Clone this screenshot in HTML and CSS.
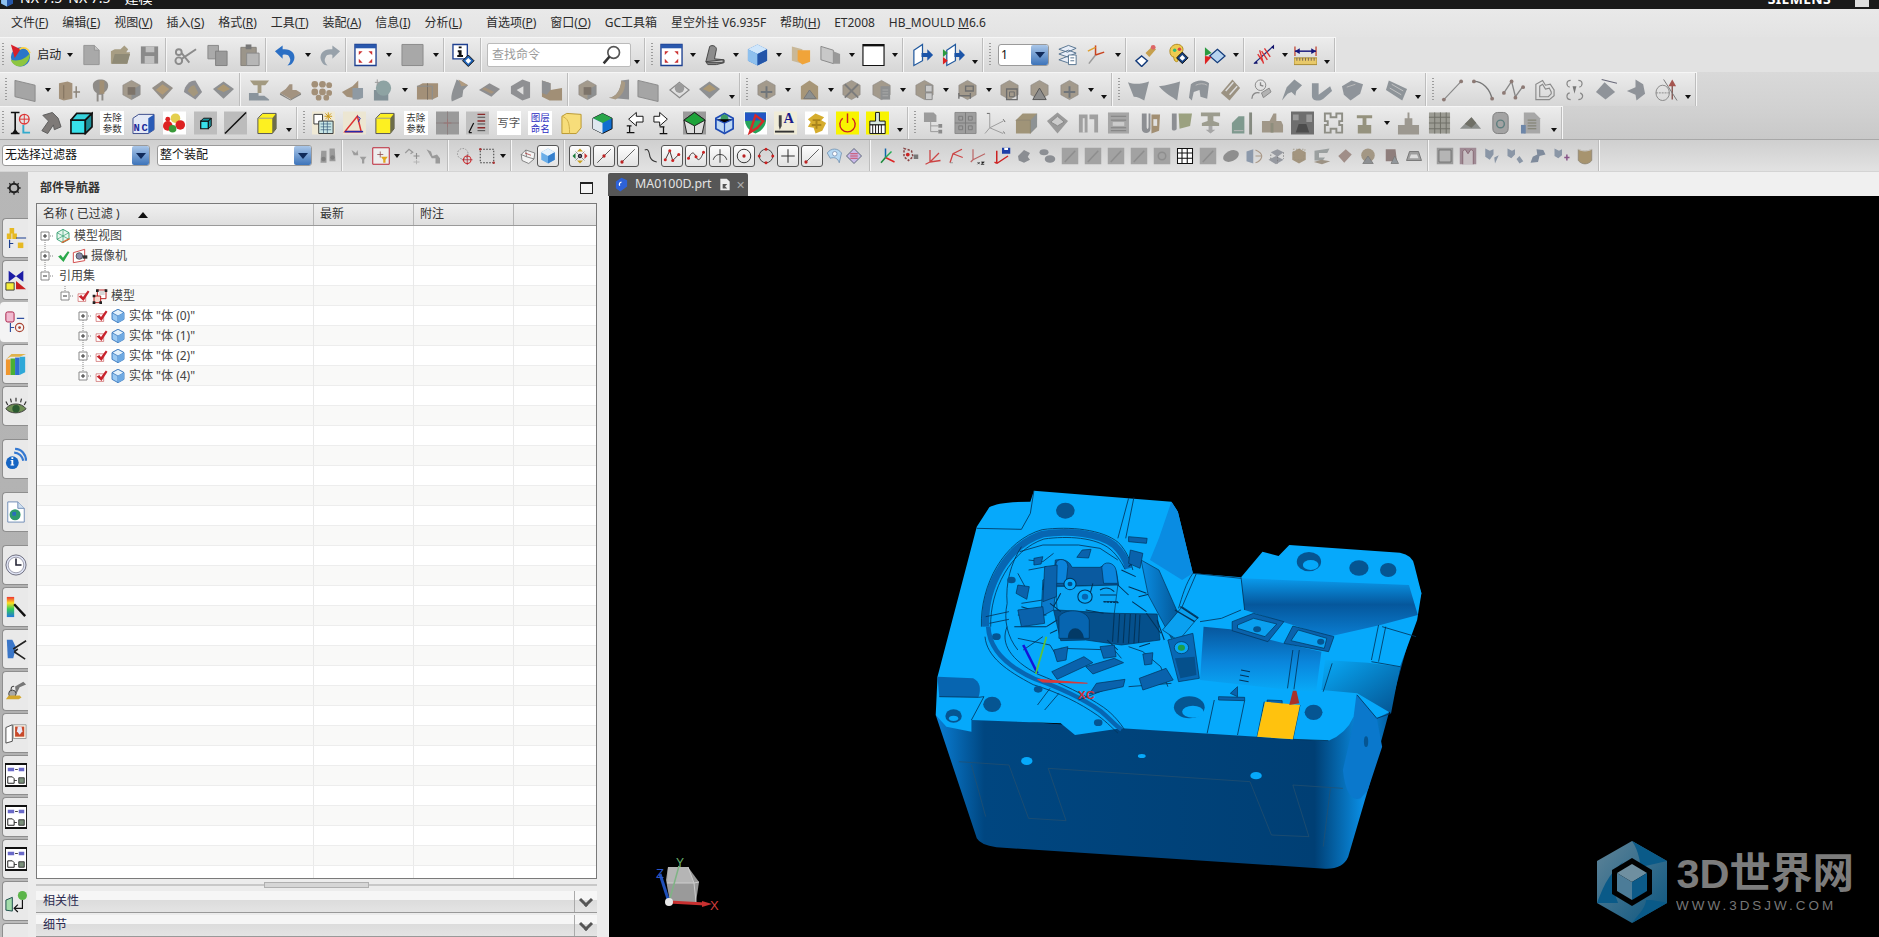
FILE: index.html
```html
<!DOCTYPE html>
<html lang="zh-CN">
<head>
<meta charset="utf-8">
<title>NX 建模</title>
<link rel="stylesheet" href="styles.css">
</head>
<body>
<svg class="sprite" xmlns="http://www.w3.org/2000/svg">
<defs>
<linearGradient id="gBlue" x1="0" y1="0" x2="1" y2="1"><stop offset="0" stop-color="#cfe6fb"/><stop offset="1" stop-color="#2f74c0"/></linearGradient>
<linearGradient id="gBody" x1="0" y1="0" x2="1" y2="0"><stop offset="0" stop-color="#0a7fd6"/><stop offset=".1" stop-color="#004680"/><stop offset=".78" stop-color="#003f74"/><stop offset=".88" stop-color="#0a8ee4"/><stop offset=".95" stop-color="#00508e"/><stop offset="1" stop-color="#0a6fc0"/></linearGradient>
<linearGradient id="gCyl" x1="0" y1="0" x2="0" y2="1"><stop offset="0" stop-color="#07569c"/><stop offset=".55" stop-color="#0a86dc"/><stop offset="1" stop-color="#08aaf8"/></linearGradient>
<linearGradient id="gWedge" x1="0" y1="0" x2="0" y2="1"><stop offset="0" stop-color="#0a9aec"/><stop offset=".45" stop-color="#05579c"/><stop offset="1" stop-color="#0a7ed2"/></linearGradient>
<linearGradient id="gRight" x1="0" y1="0" x2="1" y2="1"><stop offset="0" stop-color="#08aaf8"/><stop offset="1" stop-color="#04528f"/></linearGradient>
<linearGradient id="gBar" x1="0" y1="0" x2="1" y2="0"><stop offset="0" stop-color="#0a8ee4"/><stop offset="1" stop-color="#034f8c"/></linearGradient>
<linearGradient id="gSpec" x1="0" y1="0" x2="0" y2="1"><stop offset="0" stop-color="#e33"/><stop offset=".3" stop-color="#fd2"/><stop offset=".6" stop-color="#3c5"/><stop offset="1" stop-color="#27d"/></linearGradient>
<linearGradient id="gHexA" x1="0" y1="0" x2="1" y2="1"><stop offset="0" stop-color="#5f8498"/><stop offset="1" stop-color="#0c5680"/></linearGradient>
<path id="cb" d="M12 2l9 5v10l-9 5-9-5V7z" fill="#a39a8c" stroke="#86837d" stroke-width=".6"/>
<path id="cf" d="M12 12l9-5v10l-9 5z" fill="#8d8f90"/>
</defs>
<symbol id="logo" viewBox="0 0 24 24"><circle cx="13" cy="14" r="10" fill="#2a76c9"/><path d="M3 17c7 2 15 0 20-7 0 8-5 14-11 14-4 0-8-3-9-7z" fill="#8dc63f"/><path d="M3 1l10 5-6 9z" fill="#d8202a"/><path d="M12 6c5-3 9-1 11 4" fill="none" stroke="#ffd23f" stroke-width="1.6"/></symbol>
<symbol id="doc" viewBox="0 0 24 24"><path d="M4 2h11l5 5v15H4z" fill="#a9a9a9" stroke="#949494"/><path d="M15 2v5h5" fill="#c4c4c4" stroke="#949494"/></symbol>
<symbol id="ofold" viewBox="0 0 24 24"><path d="M2 21V8l4-2h6l4-4 4 4-2 3h4l-3 12z" fill="#a79d83"/><path d="M3 21l3-10h16l-3 10z" fill="#8f8a76"/></symbol>
<symbol id="save" viewBox="0 0 24 24"><path d="M3 3h18v18H3z" fill="#8a8a8a"/><path d="M8 3h9v6H8zM7 13h10v8H7z" fill="#c0c0c0"/></symbol>
<symbol id="scis" viewBox="0 0 24 24"><g fill="none" stroke="#8b8b8b" stroke-width="2"><circle cx="5" cy="18" r="3.5"/><circle cx="5" cy="9" r="3"/><path d="M8 16L23 6M8 10l8 10"/></g></symbol>
<symbol id="copy" viewBox="0 0 24 24"><path d="M2 2h11v14H2z" fill="#aaa" stroke="#888"/><path d="M10 8h12v15H10z" fill="#9a9a9a" stroke="#7f7f7f"/></symbol>
<symbol id="paste" viewBox="0 0 24 24"><path d="M3 4h16v19H3z" fill="#9b958a" stroke="#85817a"/><path d="M8 1h6v5H8z" fill="#777"/><path d="M9 10h13v13H9z" fill="#b6b6b6" stroke="#8a8a8a"/></symbol>
<symbol id="undo" viewBox="0 0 24 24"><path d="M1 8l8-6v4c8-1 14 4 12 11-1 3-3 6-7 6 3-3 4-6 2-9-1-2-4-3-7-2v4z" fill="#2b6fc4"/></symbol>
<symbol id="redo" viewBox="0 0 24 24"><path d="M23 8l-8-6v4C7 5 1 10 3 17c1 3 3 6 7 6-3-3-4-6-2-9 1-2 4-3 7-2v4z" fill="#97a1aa"/></symbol>
<symbol id="fit" viewBox="0 0 24 24"><path d="M1 1h22v22H1z" fill="#fff" stroke="#1d3f8f" stroke-width="1.4"/><path d="M1 1h22v4H1z" fill="#2a58ad"/><path d="M5 8h4L5 12zM19 8h-4l4 4zM5 20h4l-4-4zM19 20h-4l4-4z" fill="#c33"/></symbol>
<symbol id="gsq" viewBox="0 0 24 24"><path d="M1 1h22v22H1z" fill="#a8a8a8" stroke="#8a8a8a"/></symbol>
<symbol id="info" viewBox="0 0 24 24"><path d="M1 1h15v15H1z" fill="#fff" stroke="#1d3f8f" stroke-width="1.4"/><path d="M7 3h3v2H7zM6 7h4v5h1.500v2H5.500v-2H7V9H6z" fill="#111"/><path d="M17 12l6 6-6 6-6-6z" fill="#1f63b8" stroke="#111"/><path d="M17 15l3 3-3 3-3-3z" fill="#fff"/></symbol>
<symbol id="mag" viewBox="0 0 24 24"><circle cx="14" cy="9" r="7" fill="#fff" stroke="#555" stroke-width="2"/><path d="M9 14l-7 8" stroke="#333" stroke-width="3"/></symbol>
<symbol id="shade" viewBox="0 0 24 24"><path d="M3 19L7 3c3-2 7 0 7 3l-2 10 10 1v3l-8 2H5z" fill="#8c8c8c" stroke="#444"/><path d="M3 19l18-2v3H6z" fill="#bbb" stroke="#444"/></symbol>
<symbol id="cube" viewBox="0 0 24 24"><path d="M12 1l10 5v12l-10 5-10-5V6z" fill="#3a82d4"/><path d="M12 1l10 5-10 5L2 6z" fill="#cfe6fb"/><path d="M2 6l10 5v12L2 18z" fill="#8ec0ee"/><path d="M22 6l-10 5v12l10-5z" fill="#2455a8"/></symbol>
<symbol id="rc" viewBox="0 0 24 24"><path d="M12 2l9 5v10l-9 5-9-5V7z" fill="#9ccaf2" stroke="#2f6fb8" stroke-width="1.300"/><path d="M3 7l9 5 9-5-9-5z" fill="#e4f2fc" stroke="#2f6fb8" stroke-width="1.100"/><path d="M12 12v10" stroke="#2f6fb8" stroke-width="1.100"/><path d="M12 12l9-5v10l-9 5z" fill="#6ea9e2"/></symbol>
<symbol id="ofold2" viewBox="0 0 24 24"><path d="M3 3l11 3v15L3 18z" fill="#c9b898"/><path d="M9 7h13v12l-8 3-5-4z" fill="#f0a43a"/></symbol>
<symbol id="gdoc" viewBox="0 0 24 24"><path d="M2 3l13 4v14L2 17z" fill="#c8c8c8" stroke="#888"/><path d="M15 8l7 3v10l-7 0z" fill="#999"/></symbol>
<symbol id="wsq" viewBox="0 0 24 24"><path d="M1 1h22v22H1z" fill="#fff" stroke="#111" stroke-width="1.2"/><path d="M1 1h22v2H1z" fill="#111"/></symbol>
<symbol id="door" viewBox="0 0 24 24"><path d="M3 7l9-6v17l-9 5z" fill="#fff" stroke="#235a9e" stroke-width="1.300"/><path d="M12 1v17" stroke="#235a9e"/><path d="M11 10h6V6l6 6-6 6v-4h-6z" fill="#1c55a8"/></symbol>
<symbol id="door2" viewBox="0 0 24 24"><path d="M5 7l9-6v17l-9 5z" fill="#fff" stroke="#235a9e" stroke-width="1.300"/><path d="M1 6l5 4-5 4z" fill="#2a9a3f"/><path d="M1 14l5 4-5 4z" fill="#d22"/><path d="M13 10h5V6l6 6-6 6v-4h-5z" fill="#1c55a8"/></symbol>
<symbol id="layers" viewBox="0 0 24 24"><path d="M3 6l10-4 8 3-9 4zM3 11l10-4 8 3-9 4zM3 17l10-4 8 3-9 4z" fill="#e8eef8" stroke="#56738f"/><path d="M13 12h8v10h-8z" fill="#fff" stroke="#56738f"/><path d="M15 15h4M15 18h4" stroke="#56738f"/></symbol>
<symbol id="csys" viewBox="0 0 24 24"><g fill="none" stroke-width="1.6"><path d="M11 12L4 21" stroke="#9a9a9a"/><path d="M11 12l9-3" stroke="#c8431f"/><path d="M11 12V2" stroke="#c8431f"/><path d="M3 8l8-4" stroke="#e0a030"/></g></symbol>
<symbol id="erase" viewBox="0 0 24 24"><path d="M8 13l6 5-6 6-6-6z" fill="#fff" stroke="#123a7a" stroke-width="1.500"/><path d="M12 10l7-7 4 3-7 8z" fill="#c6a04e"/><circle cx="20" cy="4" r="2.500" fill="#d66"/></symbol>
<symbol id="palette" viewBox="0 0 24 24"><path d="M3 8c0-5 5-8 9-7 5 1 6 6 3 9-2 2-4 2-4 5 0 2 1 4-1 4-2 0-3-3-3-5-2 0-4-2-4-6z" fill="#eecb50" stroke="#b08a20"/><circle cx="8" cy="7" r="1.800" fill="#3b7"/><circle cx="13" cy="6" r="1.800" fill="#d44"/><path d="M16 9l6 6-6 6-6-6z" fill="#15407f" stroke="#111"/><path d="M16 12l3 3-3 3-3-3z" fill="#fff"/></symbol>
<symbol id="dflag" viewBox="0 0 24 24"><path d="M15 6l8 7-8 7-8-7z" fill="#b7d3ef" stroke="#123a7a" stroke-width="1.300"/><path d="M2 4l7 6-7 3z" fill="#2a9a3f"/><path d="M2 13l7 1-7 8z" fill="#d22"/></symbol>
<symbol id="ant" viewBox="0 0 24 24"><path d="M2 21L22 3" stroke="#1f2f80" stroke-width="1.400"/><path d="M6 11l6 9M10 8l6 9M13 5l6 9M8 7l4 14" stroke="#d33" stroke-width="1.400"/><path d="M2 21l3-3 1 3zM20 4l3-3 0 5z" fill="#12126a"/></symbol>
<symbol id="ruler" viewBox="0 0 24 24"><path d="M1 3v10M23 3v10" stroke="#b32" stroke-width="1.200"/><path d="M1 8h22" stroke="#15157a" stroke-width="1.500"/><path d="M1 8l5-3v6zM23 8l-5-3v6z" fill="#15157a"/><path d="M0 15h24v7H0z" fill="#e8c96a" stroke="#a88a30"/><path d="M3 15v3M6 15v3M9 15v3M12 15v3M15 15v3M18 15v3M21 15v3" stroke="#765"/></symbol>
<symbol id="sheet" viewBox="0 0 24 24"><path d="M1 2l21 5v17L1 19z" fill="#a5a5a5" stroke="#8a8a8a"/></symbol>
<symbol id="p1" viewBox="0 0 24 24"><path d="M1 5l9-2 5 2v16l-9 2-5-2z" fill="#a3917a"/><path d="M6 7v14" stroke="#7d6f5d"/><path d="M19 8v12M16 14h7" stroke="#8b8378" stroke-width="1.500"/></symbol>
<symbol id="p2" viewBox="0 0 24 24"><path d="M4 7c0-8 16-8 16 0 0 5-3 7-5 8v8h-2v-6h-3v7H8v-9c-2-1-4-3-4-8z" fill="#8e8b87"/><path d="M11 2h5v14h-5z" fill="#a18f75"/></symbol>
<symbol id="p3" viewBox="0 0 24 24"><use href="#cb"/><use href="#cf"/><path d="M8 9h8v8H8z" fill="#7d746a"/></symbol>
<symbol id="p4" viewBox="0 0 24 24"><path d="M12 2l11 8-11 12L1 10z" fill="#948f88"/><path d="M12 6l7 5-7 6-7-5z" fill="#b19a76"/></symbol>
<symbol id="p5" viewBox="0 0 24 24"><path d="M3 14C4 7 9 2 15 2l7 12-7 8z" fill="#8f9094"/><path d="M7 13c1-3 4-6 7-6l4 8-5 4z" fill="#a4977d"/></symbol>
<symbol id="p6" viewBox="0 0 24 24"><path d="M12 3l11 8-11 10L1 11z" fill="#8e9092"/><path d="M12 6l7 5-7 3-7-3z" fill="#ac9873"/></symbol>
<symbol id="p7" viewBox="0 0 24 24"><path d="M2 2h20l-4 5h-4v8h-4V7H6z" fill="#a39a80"/><path d="M1 15h10v3h6l5 4v1H1z" fill="#8a949c"/></symbol>
<symbol id="p8" viewBox="0 0 24 24"><path d="M1 15l6-4 4-5h3v6l4 0 5 3-10 7z" fill="#a39380"/><path d="M1 15l11 7 11-7v2l-11 6-11-6z" fill="#86847f"/></symbol>
<symbol id="p9" viewBox="0 0 24 24"><g fill="#a39078"><circle cx="5" cy="6" r="3.500"/><circle cx="13" cy="6" r="3.500"/><circle cx="20" cy="7" r="3"/><circle cx="5" cy="14" r="3.500"/><circle cx="13" cy="14" r="3.500"/><circle cx="20" cy="15" r="3"/><circle cx="9" cy="20" r="3"/><circle cx="17" cy="20" r="3"/></g></symbol>
<symbol id="p10" viewBox="0 0 24 24"><path d="M1 14l11-6 6-6v20l-6-2-6-1z" fill="#a3917a"/><path d="M12 10h11v10l-5 2h-6z" fill="#8f9aa3"/></symbol>
<symbol id="p11" viewBox="0 0 24 24"><path d="M2 12h15v11H2z" fill="#829197"/><circle cx="12" cy="10" r="8" fill="#8ea3a3"/><path d="M3 4h5M5.500 1v6" stroke="#999"/></symbol>
<symbol id="p12" viewBox="0 0 24 24"><path d="M1 8l6-3h16v14l-6 3H1z" fill="#a39078"/><path d="M12 5v17" stroke="#7b6f60"/><path d="M1 8h16v14" fill="none" stroke="#8a8f92"/></symbol>
<symbol id="p13" viewBox="0 0 24 24"><path d="M10 1l12 6-5 5-1 7-11 5C3 17 8 8 10 1z" fill="#8e9194"/><path d="M12 1l10 6-7 1z" fill="#b09b80"/></symbol>
<symbol id="p14" viewBox="0 0 24 24"><path d="M12 5l11 6-9 8L1 12z" fill="#8e8e90"/><path d="M7 9l10 5-3 2L4 11z" fill="#a5937c"/></symbol>
<symbol id="p15" viewBox="0 0 24 24"><path d="M2 8l12-7 8 3v16l-8 3-12-7z" fill="#8f9093"/><path d="M8 12l7-4v9z" fill="#dedede"/></symbol>
<symbol id="p16" viewBox="0 0 24 24"><path d="M2 2l9 3v7l12-2v13H10l-8-4z" fill="#a18f76"/><path d="M2 2l9 3v7l-4 5-5-2z" fill="#8e9093"/></symbol>
<symbol id="p17" viewBox="0 0 24 24"><path d="M2 20c8-1 12-8 13-18l8-1v21z" fill="#8f9093"/><path d="M2 20c8-1 12-8 13-18l4 2c0 10-5 15-10 18z" fill="#a89a84"/></symbol>
<symbol id="p18" viewBox="0 0 24 24"><path d="M12 4l10 8-10 8L2 12z" fill="none" stroke="#888" stroke-width="1.200"/><circle cx="12" cy="10" r="5" fill="#9b9b9b"/></symbol>
<symbol id="c1" viewBox="0 0 24 24"><use href="#cb"/><path d="M6 14h12M12 8v12" stroke="#70757a" stroke-width="2"/></symbol>
<symbol id="c2" viewBox="0 0 24 24"><path d="M12 2l9 6v14H3V8z" fill="#a79677"/><path d="M6 21l6-9 7 9z" fill="#8b8f8f" stroke="#777"/></symbol>
<symbol id="c3" viewBox="0 0 24 24"><use href="#cb"/><path d="M5 6l14 14M19 6L5 20" stroke="#7c7c7c" stroke-width="2"/></symbol>
<symbol id="c4" viewBox="0 0 24 24"><use href="#cb"/><path d="M11 8h10v14H11z" fill="#8e9091"/><path d="M13 12h6M13 15h6M13 18h6" stroke="#aaa"/></symbol>
<symbol id="c5" viewBox="0 0 24 24"><use href="#cb"/><path d="M13 7h7v7h-7zM13 15h7v7h-7z" fill="#c9c9c9" stroke="#888"/></symbol>
<symbol id="c6" viewBox="0 0 24 24"><use href="#cb"/><path d="M3 21v-6M3 18h12M15 21v-6M10 8h8v5h-8z" fill="none" stroke="#6f6f6f" stroke-width="1.400"/></symbol>
<symbol id="c7" viewBox="0 0 24 24"><use href="#cb"/><path d="M9 11h11v11H9z" fill="none" stroke="#6c6c6c" stroke-width="1.400"/><path d="M12 14h5v5h-5z" fill="none" stroke="#6c6c6c"/></symbol>
<symbol id="c8" viewBox="0 0 24 24"><use href="#cb"/><path d="M5 22l7-12 7 12z" fill="#8d8d8d" stroke="#555"/></symbol>
<symbol id="s1" viewBox="0 0 24 24"><path d="M1 4c8 3 15 1 22-1l-5 20c-3-2-7-4-11-4z" fill="#8f9499"/></symbol>
<symbol id="s2" viewBox="0 0 24 24"><path d="M1 8c8-1 15-3 22-5l-3 20C15 19 8 16 1 8z" fill="#8f9499"/></symbol>
<symbol id="s3" viewBox="0 0 24 24"><path d="M3 6c6-5 14-5 19-1l-2 16-7-2-1-7-6 2-2 9-3-3z" fill="#8f9499"/><path d="M8 7c4-2 9-2 12 0" stroke="#bbb" fill="none"/></symbol>
<symbol id="s4" viewBox="0 0 24 24"><path d="M2 15L14 1l8 9-11 13z" fill="#9b9282"/><path d="M7 13L15 4M11 17l8-9" stroke="#ddd" stroke-width="1.500"/></symbol>
<symbol id="s5" viewBox="0 0 24 24"><circle cx="12" cy="7" r="5.500" fill="none" stroke="#888"/><path d="M12 4v3l3 1M3 21c0-5 4-7 8-6" fill="none" stroke="#888" stroke-width="1.400"/><path d="M13 15l8-5 2 4-8 6z" fill="#b3b3b3" stroke="#888"/></symbol>
<symbol id="s6" viewBox="0 0 24 24"><path d="M2 23L7 9l8-8 8 6-6 6-1 5-4-4-4 2z" fill="#8d949a"/></symbol>
<symbol id="s7" viewBox="0 0 24 24"><path d="M2 5h7v12l12-9 2 5-9 8c-4 3-12 3-12-3z" fill="#8e959c"/></symbol>
<symbol id="s8" viewBox="0 0 24 24"><path d="M1 8l10-6 12 4-3 10-10 7-7-6z" fill="#8f949a"/><path d="M6 9l9-3" stroke="#bbb"/></symbol>
<symbol id="s9" viewBox="0 0 24 24"><path d="M4 2l19 9-5 12L1 12z" fill="#8e9499"/><path d="M7 6l12 7M5 10l12 7" stroke="#c3c3c3"/></symbol>
<symbol id="l1" viewBox="0 0 24 24"><path d="M3 22L21 3" stroke="#888" stroke-width="1.200"/><circle cx="3" cy="22" r="2" fill="#8d7a75"/><circle cx="21" cy="3" r="2" fill="#8d7a75"/></symbol>
<symbol id="l2" viewBox="0 0 24 24"><path d="M2 3c9 0 17 8 19 19" fill="none" stroke="#777" stroke-width="1.400"/><circle cx="2" cy="3" r="2" fill="#8d7a75"/><circle cx="21" cy="21" r="2" fill="#8d7a75"/></symbol>
<symbol id="l3" viewBox="0 0 24 24"><path d="M2 15L10 3l4 16 8-11" fill="none" stroke="#888" stroke-width="1.400"/><g fill="#8d7a75"><circle cx="10" cy="3" r="2"/><circle cx="2" cy="15" r="2"/><circle cx="14" cy="20" r="2"/><circle cx="22" cy="9" r="2"/></g></symbol>
<symbol id="l4" viewBox="0 0 24 24"><path d="M3 22V6l7-4 3 5 5-1 4 6v6l-5 4zM7 19V8l3-2 3 5 4-1 2 4v2l-3 3z" fill="none" stroke="#8a8a8a" stroke-width="1.200"/></symbol>
<symbol id="l5" viewBox="0 0 24 24"><path d="M8 2C3 2 3 8 7 9M8 22c-5 0-5-6-1-7M16 2c5 0 5 6 1 7M16 22c5 0 6-5 2-7" fill="none" stroke="#888" stroke-width="1.200"/><path d="M10 8l2 8 2-8z" fill="#777"/></symbol>
<symbol id="l6" viewBox="0 0 24 24"><path d="M8 1l16 4" stroke="#667" stroke-width="1.200"/><path d="M11 4l11 10-10 8L2 14z" fill="#8f9399"/></symbol>
<symbol id="l7" viewBox="0 0 24 24"><path d="M12 1l8 5 2 10-9 7-1-6-9-4 9-4z" fill="#8f9399"/></symbol>
<symbol id="l8" viewBox="0 0 24 24"><ellipse cx="8" cy="15" rx="7" ry="8" fill="none" stroke="#888"/><path d="M1 15h14" stroke="#888" stroke-dasharray="2 1"/><path d="M18 22V6" stroke="#8a5a55" stroke-width="1.500"/><path d="M18 1l-4 7h8z" fill="#a5554f"/><path d="M9 1l14 22" stroke="#777"/></symbol>
<symbol id="dim" viewBox="0 0 24 24"><path d="M3 1h9M3 23h9M7.500 1v22" stroke="#111" stroke-width="1.700"/><path d="M4 1h7M4 23h7L7.500 18z" fill="#111"/><circle cx="17" cy="8" r="5" fill="none" stroke="#d33" stroke-width="1.400"/><path d="M12 8h10M17 3v10" stroke="#d33"/><path d="M16 14v8h7" fill="none" stroke="#3ac" stroke-width="2"/></symbol>
<symbol id="wrench" viewBox="0 0 24 24"><path d="M4 4l10-3 6 6 3 9-7 3-1-5-6 9-6-3 7-10z" fill="#7e7a78" stroke="#5c5c5c"/></symbol>
<symbol id="tcube" viewBox="0 0 24 24"><path d="M1 9h15v14H1z" fill="#37e0ea" stroke="#111" stroke-width="1.700"/><path d="M1 9l6-7h16l-7 7z" fill="#37d2dc" stroke="#111" stroke-width="1.700"/><path d="M16 9l7-7v14l-7 7z" fill="#1c8f99" stroke="#111" stroke-width="1.700"/></symbol>
<symbol id="red" viewBox="0 0 24 24"><path d="M0 0h24v24H0z" fill="#fff"/><circle cx="13" cy="7" r="5" fill="#e4cf4e"/><circle cx="5" cy="15" r="5" fill="#d22"/><circle cx="18" cy="14" r="5" fill="#d22"/><circle cx="10" cy="18" r="4" fill="#3a9a3a"/><circle cx="5" cy="8" r="2.500" fill="#d22"/></symbol>
<symbol id="scube" viewBox="0 0 24 24"><path d="M0 0h24v24H0z" fill="#bdbdbd"/><path d="M7 10h8v8H7z" fill="#37e0ea" stroke="#111" stroke-width="1.300"/><path d="M7 10l3-3h8l-3 3zM15 10l3-3v8l-3 3z" fill="#1c8f99" stroke="#111"/></symbol>
<symbol id="sline" viewBox="0 0 24 24"><path d="M0 0h24v24H0z" fill="#bcbcbc"/><path d="M1 23L23 1" stroke="#111" stroke-width="1.600"/></symbol>
<symbol id="ycube" viewBox="0 0 24 24"><path d="M3 7l5-5h14v16l-4 5H3z" fill="#fdf021" stroke="#555" stroke-width="1"/><path d="M18 7l4-5v16l-4 5z" fill="#6d6d4a"/><path d="M3 7h15" stroke="#999"/></symbol>
<symbol id="spark" viewBox="0 0 24 24"><path d="M0 0h24v24H0z" fill="#efe9d5"/><path d="M2 3h9v6l-3 4H2z" fill="#fff" stroke="#333"/><path d="M7 10h15v13H7z" fill="#c8e6e6" stroke="#333"/><path d="M9 13h11M9 16h11M9 19h11M12 10v13M16 10v13" stroke="#357" stroke-width=".7"/><path d="M17 1v8M13 5h8M14 2l6 6M20 2l-6 6" stroke="#cc9a18"/></symbol>
<symbol id="tri" viewBox="0 0 24 24"><path d="M0 0h24v24H0z" fill="#ece6d2"/><path d="M2 21L15 5l4 16z" fill="none" stroke="#d33" stroke-width="1.600"/><path d="M2 21h19" stroke="#2828a8" stroke-width="1.600"/><path d="M15 5l3 2-2 4" stroke="#2828a8" fill="none"/></symbol>
<symbol id="gplus" viewBox="0 0 24 24"><path d="M0 0h24v24H0z" fill="#9a9a9a"/><path d="M12 0v24M0 12h24" stroke="#8a7f7f"/><path d="M8 12h8M12 8v8" stroke="#9a7575"/></symbol>
<symbol id="xyz" viewBox="0 0 24 24"><path d="M0 0h24v24H0z" fill="#c0c0c0"/><path d="M3 22l5-10M3 22h3" stroke="#111" stroke-width="1.300"/><path d="M12 3h8M12 10h8M12 17h8" stroke="#8a2a2a" stroke-width="1.500"/><path d="M12 6h8M12 13h8M12 20h8" stroke="#444"/></symbol>
<symbol id="yfold" viewBox="0 0 24 24"><path d="M2 23V5l5-3 15 1v14l-5 6z" fill="#f7dd7a" stroke="#b9982e"/><path d="M2 5c6 2 8 6 8 18" fill="none" stroke="#d0ae48"/></symbol>
<symbol id="bgc" viewBox="0 0 24 24"><path d="M12 2l10 5v11l-10 5-10-5V7z" fill="#106ed0" stroke="#111"/><path d="M2 7l10-5 10 5-10 5z" fill="#2aa64a"/><path d="M2 7l10 5v11L2 18z" fill="#dfe8ef"/></symbol>
<symbol id="arrL" viewBox="0 0 24 24"><path d="M8 8l8-7v4h7v6h-7v4z" fill="#fff" stroke="#111"/><path d="M9 15v7M6 22h8M6 15h5" stroke="#111" stroke-width="1.300"/></symbol>
<symbol id="arrR" viewBox="0 0 24 24"><path d="M16 8L8 1v4H2v6h6v4z" fill="#fff" stroke="#111"/><path d="M12 16v7M8 23h8M8 16h5" stroke="#111" stroke-width="1.300"/></symbol>
<symbol id="gcube" viewBox="0 0 24 24"><path d="M0 0h24v24H0z" fill="#9a9a9a"/><path d="M12 1l11 8-3 14H4L1 9z" fill="#ddd" stroke="#222"/><path d="M12 1l11 8-11 6L1 9z" fill="#1ea33a" stroke="#222"/><path d="M12 15v8" stroke="#222"/></symbol>
<symbol id="cage" viewBox="0 0 24 24"><path d="M12 2l9 5v11l-9 5-9-5V7z" fill="#bcd7f2" stroke="#1f4bb4" stroke-width="1.800"/><circle cx="12" cy="7" r="4" fill="#3d9a62"/><path d="M12 12v10M3 8l9 4 9-4" stroke="#1f4bb4" stroke-width="1.300"/></symbol>
<symbol id="shield" viewBox="0 0 24 24"><path d="M0 0h24v24H0z" fill="#fff"/><path d="M1 1h22v9c-1 7-6 11-11 13C7 21 2 17 1 10z" fill="#26a35a"/><path d="M1 1h22v8L1 10z" fill="#2255c4"/><path d="M6 22L12 4l8 6-6 7z" fill="none" stroke="#d62828" stroke-width="2.400"/></symbol>
<symbol id="zi" viewBox="0 0 24 24"><path d="M0 0h24v24H0z" fill="#fff"/><path d="M3 8l8-6 9 4-3 3 5 3-4 8-7 3-2-6-6-1 3-5z" fill="#d6ad2e"/><path d="M8 9h8M12 9v9M7 14h10" stroke="#a9841c" stroke-width="2"/></symbol>
<symbol id="power" viewBox="0 0 24 24"><path d="M0 0h24v24H0z" fill="#f8f400"/><path d="M7 7a8 8 0 1 0 10 0" fill="none" stroke="#c22" stroke-width="1.500"/><path d="M12 2v10" stroke="#c22" stroke-width="1.500"/></symbol>
<symbol id="brush" viewBox="0 0 24 24"><path d="M0 0h24v24H0z" fill="#f8f400"/><path d="M10 1h4v9h6v4H4v-4h6z" fill="#d8e8e0" stroke="#111"/><path d="M4 14h16v9H4z" fill="#fff" stroke="#111"/><path d="M7 14v9M10 14v9M13 14v9M16 14v9" stroke="#111"/></symbol>
<symbol id="d1" viewBox="0 0 24 24"><path d="M1 1h10l3 3v7H1z" fill="#9b9b9b"/><path d="M16 13h4v4h-4zM16 19h4v4h-4z" fill="#8b8b8b"/><path d="M8 11v10h8M8 15h8" stroke="#999" fill="none"/></symbol>
<symbol id="d2" viewBox="0 0 24 24"><path d="M1 1h22v22H1z" fill="#9e9e9e" stroke="#8a8a8a"/><path d="M12 1v22M1 12h22M5 5h4v4H5zM15 5h4v4h-4zM5 15h4v4H5zM15 15h4v4h-4z" fill="none" stroke="#7b7b7b"/></symbol>
<symbol id="d3" viewBox="0 0 24 24"><path d="M6 17V2M6 17l14 6M6 17l-5 6M6 17l14-7" stroke="#9b9b9b" fill="none"/><path d="M3 2l3 0M20 8l2 3M20 21l2 2" stroke="#666"/></symbol>
<symbol id="d4" viewBox="0 0 24 24"><path d="M1 9l7-7h15v14l-7 7H1z" fill="#a09478"/><path d="M16 9l7-7v14l-7 7z" fill="#8d9294"/><path d="M1 9h15v14" fill="none" stroke="#8f8873"/></symbol>
<symbol id="d5" viewBox="0 0 24 24"><path d="M12 1l11 9-11 13L1 10z" fill="#9a9a9a"/><path d="M12 5l7 6-7 4-7-4z" fill="#ccc" stroke="#888"/></symbol>
<symbol id="d6" viewBox="0 0 24 24"><path d="M2 3h9v19H2zM13 3h9v19h-4V8h-5z" fill="#a0a0a0"/><path d="M6 7v15h2V7z" fill="#ddd"/></symbol>
<symbol id="d7" viewBox="0 0 24 24"><path d="M1 1h22v22H1z" fill="#a6a6a6"/><path d="M4 5h16M4 9h16M4 17h16M4 20h16" stroke="#7e7e7e"/><path d="M6 11h12v4H6z" fill="#ccc"/></symbol>
<symbol id="d8" viewBox="0 0 24 24"><path d="M4 2h5v14c0 3 2 3 2 0V2h2v16c0 6-9 6-9 0z" fill="#8d8f93"/><path d="M14 3h9l-1 17-8 3z" fill="#a28f73"/><path d="M16 8h4v7h-4z" fill="#e0e0e0"/></symbol>
<symbol id="d9" viewBox="0 0 24 24"><path d="M3 2h5v16c0 2-5 3-5 0z" fill="#8d8f93"/><path d="M10 2h14l-2 13-11 3z" fill="#9ba180"/></symbol>
<symbol id="d10" viewBox="0 0 24 24"><path d="M2 1h20v4h-7v5l6 2v3H3v-3l6-2V5H2z" fill="#9c9c8e"/><path d="M10 15h4v4h3l-5 4-5-4h3z" fill="#a6a6a6"/></symbol>
<symbol id="d11" viewBox="0 0 24 24"><path d="M2 12l7-7h6v18H2z" fill="#7f9a8f"/><path d="M20 1h3v23h-3z" fill="#858a80"/><path d="M4 20h10" stroke="#bbb"/></symbol>
<symbol id="d12" viewBox="0 0 24 24"><path d="M1 22V10h8l4-8h3v8h5l2 4v8z" fill="#a09788"/><path d="M10 22V12h3v10z" fill="#8d8d7c"/></symbol>
<symbol id="d13" viewBox="0 0 24 24"><path d="M0 0h24v24H0z" fill="#6e6e6e"/><path d="M2 3h6v6H2zM16 3h6v8h-6z" fill="#9a9a9a"/><path d="M8 13h8l3 9H5z" fill="#4c4c4c"/></symbol>
<symbol id="d14" viewBox="0 0 24 24"><path d="M3 2h6v4h6V2h6v8h-3v4h3v8h-6v-4H9v4H3v-8h3v-4H3z" fill="none" stroke="#8e8e85" stroke-width="2"/></symbol>
<symbol id="d15" viewBox="0 0 24 24"><path d="M4 4h16v3h-6v7h5v9H5v-9h5V7H4z" fill="#95927e"/></symbol>
<symbol id="d16" viewBox="0 0 24 24"><path d="M1 14h7V7h3V1h2v6h3v7h7v10H1z" fill="#9c9890"/></symbol>
<symbol id="d17" viewBox="0 0 24 24"><path d="M1 1h22v22H1z" fill="#9c9c94"/><path d="M1 6h22M1 12h22M1 18h22M7 1v22M13 1v22M19 1v22" stroke="#6f6f66"/></symbol>
<symbol id="d18" viewBox="0 0 24 24"><path d="M1 18L13 6l10 12H12z" fill="#8c8f8d"/><path d="M6 13l7-7 5 6-5 5z" fill="#6f6f66"/></symbol>
<symbol id="d19" viewBox="0 0 24 24"><rect x="4" y="1" width="16" height="22" rx="5" fill="#a3a3a3" stroke="#7e7e7e"/><circle cx="12" cy="13" r="4" fill="none" stroke="#5f7f7f" stroke-width="1.500"/></symbol>
<symbol id="d20" viewBox="0 0 24 24"><path d="M4 1h11l6 6v16H4z" fill="#a7a7a7"/><path d="M8 9h9M8 12h9M8 15h9M8 18h9" stroke="#7b7b6a"/><path d="M1 14h5v9H1z" fill="#6d86a8"/></symbol>
<symbol id="binoc" viewBox="0 0 24 24"><path d="M3 5h7v16H2zM14 2h7l1 17h-8z" fill="#9a9a9a"/><circle cx="6" cy="16" r="3" fill="#7f7f7f"/><circle cx="18" cy="14" r="3" fill="#7f7f7f"/></symbol>
<symbol id="fun" viewBox="0 0 24 24"><path d="M2 4l6 4 2-4 1 7H5zM13 13h9l-3 4v5h-3v-5z" fill="#9d9d9d"/></symbol>
<symbol id="rbox" viewBox="0 0 24 24"><path d="M1 1h22v22H1z" fill="#eee" stroke="#b23" stroke-width="1.300"/><path d="M11 6v8M7 10h8" stroke="#8a3f3f"/><path d="M12 13h9l-3 4v4l-3 0v-4z" fill="#e0a520"/></symbol>
<symbol id="dim1" viewBox="0 0 24 24"><path d="M3 8l5-5 5 4-3 2" fill="none" stroke="#999" stroke-width="1.600"/><path d="M14 12h8M18 8v8" stroke="#8e8e8e" stroke-width="1.500"/><path d="M14 20h8M18 17v6" stroke="#aaa"/></symbol>
<symbol id="dim2" viewBox="0 0 24 24"><path d="M2 3l6 3 2 6 6-2 4 5v7h-6v-7H9z" fill="#9a9a9a"/></symbol>
<symbol id="tgt" viewBox="0 0 24 24"><circle cx="9" cy="9" r="7" fill="none" stroke="#777" stroke-dasharray="2 2"/><circle cx="15" cy="17" r="5" fill="none" stroke="#c22" stroke-width="1.400"/><path d="M8 17h14M15 10v14" stroke="#a23"/></symbol>
<symbol id="drect" viewBox="0 0 24 24"><path d="M3 3h18v18H3z" fill="none" stroke="#333" stroke-dasharray="2 2" stroke-width="1.300"/><circle cx="3" cy="3" r="1.600" fill="#a33"/><circle cx="21" cy="21" r="1.600" fill="#a33"/></symbol>
<symbol id="wire" viewBox="0 0 24 24"><path d="M3 10l6-6 12 4-1 8-7 6-9-4z" fill="#f4f4f4" stroke="#666"/><path d="M9 4l1 9 10 3M10 13l-7-3" fill="none" stroke="#666"/><path d="M8 8l8 3" stroke="#a33"/></symbol>
<symbol id="bcube" viewBox="0 0 24 24"><path d="M12 2l9 5v10l-9 5-9-5V7z" fill="#6aaee8"/><path d="M12 2l9 5-9 5-9-5z" fill="#e5f2fc"/><path d="M12 12l9-5v10l-9 5z" fill="#3680cd"/></symbol>
<symbol id="snap" viewBox="0 0 24 24"><g fill="#c8a020"><path d="M12 2l4 4H8zM12 22l-4-4h8z"/></g><g fill="#1a7a3a"><path d="M2 12l4-4v8z"/></g><path d="M22 12l-4 4V8z" fill="#c33"/><circle cx="12" cy="12" r="3" fill="#223"/><path d="M6 6l12 12M18 6L6 18" stroke="#777"/></symbol>
<symbol id="lr" viewBox="0 0 24 24"><path d="M3 21L21 3" stroke="#333"/><circle cx="12" cy="12" r="2.200" fill="#b22"/></symbol>
<symbol id="lr2" viewBox="0 0 24 24"><path d="M3 21L21 3" stroke="#333"/><circle cx="4" cy="20" r="2.200" fill="#b22"/></symbol>
<symbol id="sq1" viewBox="0 0 24 24"><path d="M5 4c6-3 6 6 7 9s4 6 9 7" fill="none" stroke="#333" stroke-width="1.400"/></symbol>
<symbol id="zig" viewBox="0 0 24 24"><path d="M3 17L9 5l4 13 8-8" fill="none" stroke="#433" stroke-width="1.300"/><g fill="#c22"><circle cx="3" cy="17" r="2"/><circle cx="9" cy="5" r="2"/><circle cx="13" cy="18" r="2"/><circle cx="21" cy="10" r="2"/></g></symbol>
<symbol id="wave" viewBox="0 0 24 24"><path d="M2 15c4-9 7-9 10-2s6 4 10-6" fill="none" stroke="#433" stroke-width="1.300"/><circle cx="12" cy="13" r="2" fill="#c22"/><circle cx="22" cy="7" r="2" fill="#c22"/><circle cx="2" cy="15" r="2" fill="#c22"/></symbol>
<symbol id="tee" viewBox="0 0 24 24"><path d="M12 3v18M3 17c2-6 6-7 9-7s7 1 9 7" fill="none" stroke="#333" stroke-width="1.300"/></symbol>
<symbol id="ring" viewBox="0 0 24 24"><circle cx="12" cy="12" r="9" fill="none" stroke="#333" stroke-width="1.300"/><circle cx="12" cy="12" r="2.200" fill="#b22"/></symbol>
<symbol id="octo" viewBox="0 0 24 24"><circle cx="12" cy="12" r="9" fill="none" stroke="#444" stroke-width="1.300"/><g fill="#c22"><circle cx="12" cy="3" r="2"/><circle cx="12" cy="21" r="2"/><circle cx="3" cy="12" r="2"/><circle cx="21" cy="12" r="2"/></g></symbol>
<symbol id="plus" viewBox="0 0 24 24"><path d="M12 3v18M3 12h18" stroke="#333" stroke-width="1.400"/></symbol>
<symbol id="barc" viewBox="0 0 24 24"><path d="M3 8c5-7 14-7 19 0l-3 13c-2-6-6-8-12-6z" fill="#b7d8f2" stroke="#6a8bac"/><circle cx="13" cy="9" r="3" fill="#fff" stroke="#78a"/></symbol>
<symbol id="dchk" viewBox="0 0 24 24"><path d="M12 2l10 10-10 10L2 12z" fill="#c9b9e8" stroke="#345"/><path d="M7 9h10M7 12h10M7 15h10" stroke="#c23"/></symbol>
<symbol id="r1" viewBox="0 0 24 24"><path d="M10 14V2" stroke="#16a" stroke-width="2"/><path d="M10 14l12 6" stroke="#d22" stroke-width="2"/><path d="M10 14l-6 7" stroke="#1a8a3a" stroke-width="2"/><path d="M10 14l8-8" stroke="#2a5" stroke-width="2"/></symbol>
<symbol id="r2" viewBox="0 0 24 24"><path d="M4 2l10 3 2 8-6 5-6-5z" fill="none" stroke="#844" stroke-dasharray="3 2" stroke-width="2"/><path d="M17 10h6v6h-6z" fill="#777"/><circle cx="9" cy="10" r="2.500" fill="#c22"/></symbol>
<symbol id="r3" viewBox="0 0 24 24"><path d="M8 20V4M8 20l14-2M8 20L2 23M8 20L20 8" stroke="#c44" stroke-width="1.700" fill="none"/></symbol>
<symbol id="r4" viewBox="0 0 24 24"><path d="M4 21L8 9l12-6M8 9l13 5" stroke="#c44" stroke-width="1.700" fill="none"/><path d="M4 21h4" stroke="#888"/></symbol>
<symbol id="r5" viewBox="0 0 24 24"><path d="M4 17V3M4 17L20 9M4 17L1 20" stroke="#b66" stroke-width="1.600" fill="none"/><path d="M10 20l3 3M13 20l-3 3M15 20h4l-4 3h4" stroke="#222"/></symbol>
<symbol id="r6" viewBox="0 0 24 24"><path d="M5 22V5M5 22L20 12M5 22l-3-2" stroke="#c22" stroke-width="2" fill="none"/><path d="M12 1h11v8H12z" fill="#1c3fa8"/><path d="M15 1h5v3h-5z" fill="#fff"/></symbol>
<symbol id="bl1" viewBox="0 0 24 24"><path d="M4 12l8-8 8 4-3 5 3 4-8 4-7-3z" fill="#8a8d92"/></symbol>
<symbol id="bl2" viewBox="0 0 24 24"><ellipse cx="8" cy="7" rx="6" ry="4" fill="#8c8f94"/><ellipse cx="16" cy="16" rx="7" ry="5" fill="#8c8f94"/></symbol>
<symbol id="ds" viewBox="0 0 24 24"><path d="M1 1h22v22H1z" fill="#a2a2a2"/><path d="M5 20L19 5" stroke="#8e8e8e" stroke-width="2"/></symbol>
<symbol id="dsc" viewBox="0 0 24 24"><path d="M1 1h22v22H1z" fill="#a2a2a2"/><circle cx="12" cy="12" r="5" fill="none" stroke="#8e8e8e" stroke-width="2"/></symbol>
<symbol id="dg" viewBox="0 0 24 24"><path d="M2 2h20v20H2z" fill="#fff" stroke="#111" stroke-width="1.400"/><path d="M2 8h20M2 15h20M8 2v20M15 2v20" stroke="#111" stroke-width="1.400"/></symbol>
<symbol id="oval" viewBox="0 0 24 24"><ellipse cx="12" cy="12" rx="11" ry="7" fill="#8e8e8e" transform="rotate(-25 12 12)"/></symbol>
<symbol id="scr" viewBox="0 0 24 24"><path d="M2 6l9-3v19l-9-3z" fill="#8c99ab"/><path d="M14 4c7 3 9 7 8 10-1 3-4 6-8 7M14 12h8" fill="none" stroke="#a98" stroke-width="1.500"/></symbol>
<symbol id="ham" viewBox="0 0 24 24"><path d="M5 7l9-4 8 4-8 6zM2 17l10 6 10-6-10-5z" fill="#9699a0"/><path d="M5 10v7M14 13v9M22 7v9" stroke="#777" stroke-dasharray="2 2"/></symbol>
<symbol id="tan1" viewBox="0 0 24 24"><path d="M12 2l9 5v10l-9 5-9-5V7z" fill="#a3957f"/><path d="M4 3h16l-2 14H6z" fill="none" stroke="#99907d" stroke-dasharray="2 2"/></symbol>
<symbol id="pl1" viewBox="0 0 24 24"><path d="M2 5l20-3-3 6H8v6h8l-3 4H2z" fill="#9a9f9f"/><path d="M1 20l10-3 12 2-11 4z" fill="#9c9284"/></symbol>
<symbol id="dm" viewBox="0 0 24 24"><path d="M3 12L13 3l8 7-10 11z" fill="#a08e88"/></symbol>
<symbol id="ball" viewBox="0 0 24 24"><circle cx="12" cy="11" r="9" fill="#a39784"/><path d="M5 22l7-10 7 10z" fill="#8c8f92" stroke="#777"/></symbol>
<symbol id="tall" viewBox="0 0 24 24"><path d="M5 3h13l2 16H5z" fill="#8e7e7c"/><path d="M12 22l5-10 5 10z" fill="#91969a" stroke="#777"/></symbol>
<symbol id="trap" viewBox="0 0 24 24"><path d="M6 6h12l4 12H2z" fill="#9e9e9e" stroke="#666"/><path d="M8 10h8l2 5H6z" fill="#ddd"/></symbol>
<symbol id="fr1" viewBox="0 0 24 24"><path d="M1 1h22v22H1z" fill="#9a9a9a"/><path d="M4 4h16v16H4z" fill="#b5b5b5" stroke="#666"/></symbol>
<symbol id="fr2" viewBox="0 0 24 24"><path d="M1 1h22v22H1z" fill="#9f8a94"/><path d="M5 23V6l3-3 4 6 4-6 3 3v17" fill="#c8c1c4" stroke="#7c5966"/></symbol>
<symbol id="lf1" viewBox="0 0 24 24"><path d="M3 2l6 3 5-2 0 7-5 7-6-4zM15 14l6-3-5 11z" fill="#8a96a6"/></symbol>
<symbol id="lf2" viewBox="0 0 24 24"><path d="M2 2l6 3 4-2 0 7-5 5-5-3zM14 16l4-4 5 7-5 3z" fill="#8a96a6"/></symbol>
<symbol id="lf3" viewBox="0 0 24 24"><path d="M10 3l9 1 3 6-8 2-2 8-10 1 3-8 6-3z" fill="#7f8b9c"/></symbol>
<symbol id="lf4" viewBox="0 0 24 24"><path d="M2 2l6 3 4-2v8l-5 4-5-3z" fill="#8a96a6"/><path d="M15 14h7M18.500 10v8" stroke="#858" stroke-width="2"/></symbol>
<symbol id="bowl" viewBox="0 0 24 24"><path d="M3 3c6 3 12 3 18 0v15c-5 6-13 6-18 0z" fill="#a7946f" stroke="#8a8374"/><path d="M3 3c6 3 12 3 18 0" fill="none" stroke="#ddd"/></symbol>
<symbol id="gear" viewBox="0 0 24 24"><circle cx="12" cy="12" r="6.500" fill="none" stroke="#222" stroke-width="3"/><path d="M12 2v3M12 19v3M2 12h3M19 12h3M5 5l2 2M17 17l2 2M19 5l-2 2M7 17l-2 2" stroke="#222" stroke-width="2"/></symbol>
<symbol id="nv1" viewBox="0 0 24 24"><g fill="#e6b923"><path d="M5 1h5v6H5zM2 7h5v6H2zM8 7h5v6H8z"/></g><path d="M5 14v9M5 18h4M12 12h11" stroke="#1d3f8f" stroke-width="1.300"/><path d="M14 17h6v6h-6z" fill="#e6b923"/></symbol>
<symbol id="nv2" viewBox="0 0 24 24"><path d="M4 2l8 6 8-6v12l-8-6-8 6z" fill="#1c1ca5"/><path d="M1 15h9v8H1z" fill="#f6ef3a" stroke="#333"/><path d="M12 22l11 0-11-9z" fill="#c82020"/></symbol>
<symbol id="nv3" viewBox="0 0 24 24"><rect x="2" y="1" width="9" height="11" rx="2" fill="#f1bad0" stroke="#a4163f"/><path d="M7 13v10M7 18h4M14 8h8" stroke="#3050a0" stroke-width="1.300"/><circle cx="17" cy="18" r="4.500" fill="none" stroke="#a43" stroke-width="1.300"/><circle cx="17" cy="18" r="1.500" fill="#a43"/></symbol>
<symbol id="nv4" viewBox="0 0 24 24"><path d="M1 7l5 0v17H1z" fill="#f0962d"/><path d="M6 6h5v18H6z" fill="#4ab035"/><path d="M11 5h5v19h-5z" fill="#2e6ed0"/><path d="M16 4h6v17l-6 3z" fill="#2ea8d8"/><path d="M1 7L7 1h16l-7 3H6z" fill="#dfb34b"/></symbol>
<symbol id="nv5" viewBox="0 0 24 24"><path d="M1 15C5 8 18 8 23 15c-5 6-18 6-22 0z" fill="#6f8f55" stroke="#333"/><circle cx="12" cy="15" r="4" fill="#2a5a30"/><path d="M3 11L1 7M7 8L6 4M12 7V3M17 8l1-4M21 11l2-4" stroke="#333" stroke-width="1.300"/></symbol>
<symbol id="nv6" viewBox="0 0 24 24"><circle cx="8" cy="16" r="7" fill="#1665c3"/><path d="M7 10h2v2H7zM6 13h3v5h1v1H6v-1h1v-4H6z" fill="#fff"/><path d="M10 5c5 0 9 4 10 9M11 1c7 0 12 6 12 13" fill="none" stroke="#3579d1" stroke-width="2.400"/></symbol>
<symbol id="nv7" viewBox="0 0 24 24"><path d="M3 1h11l7 7v15H3z" fill="#fff" stroke="#6a88b4"/><path d="M14 1v7h7" fill="#d0e0f0" stroke="#6a88b4"/><circle cx="11" cy="15" r="6" fill="#2f9a6c"/><path d="M8 12h4v4H8z" fill="#2b6cbe"/></symbol>
<symbol id="nv8" viewBox="0 0 24 24"><circle cx="12" cy="12" r="11" fill="#dfe4f4" stroke="#667"/><circle cx="12" cy="12" r="8.500" fill="#fff" stroke="#99a"/><path d="M12 5v7h6" fill="none" stroke="#223" stroke-width="1.700"/></symbol>
<symbol id="nv9" viewBox="0 0 24 24"><path d="M2 1h8v22H2z" fill="url(#gSpec)"/><path d="M10 9l12 13" stroke="#111" stroke-width="2.600"/></symbol>
<symbol id="nv10" viewBox="0 0 24 24"><path d="M2 2h6l4 8-3 12H3z" fill="#3a76c8"/><path d="M9 12L23 3M10 15l12 8M14 12l-4 3" stroke="#222" stroke-width="1.800"/></symbol>
<symbol id="nv11" viewBox="0 0 24 24"><path d="M11 7l9-5 3 3-7 3 -4 8z" fill="#777"/><circle cx="8" cy="15" r="4" fill="#a9a9a9" stroke="#444"/><path d="M1 21h14l3-2-2-2H4z" fill="#d4a72c"/><path d="M10 7c-3-1-4 3-3 5" fill="none" stroke="#444" stroke-width="1.200"/></symbol>
<symbol id="nv12" viewBox="0 0 24 24"><path d="M1 6l7-3v18l-7 2z" fill="#fff" stroke="#444"/><path d="M9 3h14v15H9z" fill="#f9f5e8" stroke="#999"/><path d="M11 5h10v11H11z" fill="#c84a2a"/><path d="M14 5h4l1 5-3 4-3-4z" fill="#e8e8f8"/></symbol>
<symbol id="nv13" viewBox="0 0 24 24"><path d="M0 0h24v24H0z" fill="#fff" stroke="#111" stroke-width="2"/><path d="M3 4h7v4H3zM15 4h6v4h-6z" fill="#6a6ac8"/><path d="M11 6h3M10 18h3" stroke="#333"/><path d="M3 14h5l2 2v5H3z" fill="#fff" stroke="#111"/><path d="M15 15h6v6h-6z" fill="#7a8f7a" stroke="#333"/></symbol>
<symbol id="nv14" viewBox="0 0 24 24"><path d="M1 11l7-3v15l-7-1z" fill="#a3dcaa" stroke="#144"/><path d="M19 11v9h-8M14 16l-4 4 4 4" fill="none" stroke="#111" stroke-width="1.300"/><circle cx="19" cy="6" r="5" fill="#5cb54a"/></symbol>
<symbol id="pb" viewBox="0 0 16 20"><path d="M8 0v20M13 10h3" stroke="#888" stroke-dasharray="1 1" fill="none"/><path d="M4 6h8v8H4z" fill="#fff" stroke="#888"/><path d="M6 10h4M8 8v4" stroke="#333"/></symbol>
<symbol id="pd" viewBox="0 0 16 20"><path d="M8 10v10M13 10h3" stroke="#888" stroke-dasharray="1 1" fill="none"/><path d="M4 6h8v8H4z" fill="#fff" stroke="#888"/><path d="M6 10h4M8 8v4" stroke="#333"/></symbol>
<symbol id="pu" viewBox="0 0 16 20"><path d="M8 0v10M13 10h3" stroke="#888" stroke-dasharray="1 1" fill="none"/><path d="M4 6h8v8H4z" fill="#fff" stroke="#888"/><path d="M6 10h4M8 8v4" stroke="#333"/></symbol>
<symbol id="mu" viewBox="0 0 16 20"><path d="M8 0v10M13 10h3" stroke="#888" stroke-dasharray="1 1" fill="none"/><path d="M4 6h8v8H4z" fill="#fff" stroke="#888"/><path d="M6 10h4" stroke="#333"/></symbol>
<symbol id="mvw" viewBox="0 0 24 24"><path d="M12 2l9 5v10l-9 5-9-5V7z" fill="#e8f6ee" stroke="#2a9a6a" stroke-width="1.300"/><path d="M3 7l18 10M21 7L3 17M12 2v20" stroke="#2a9a6a"/><path d="M10 22l12-6" stroke="#d63" stroke-width="2"/></symbol>
<symbol id="ckg" viewBox="0 0 24 24"><path d="M2 13l5-3 4 5L20 3l3 2-11 18z" fill="#2aa84a"/></symbol>
<symbol id="cam" viewBox="0 0 24 24"><path d="M2 7l17-5v17L2 22z" fill="#fff" stroke="#c33" stroke-width="1.300"/><circle cx="11" cy="12" r="5" fill="#8a8aa8" stroke="#333"/><path d="M16 11h7v5h-7z" fill="#333"/></symbol>
<symbol id="ckr" viewBox="0 0 24 24"><path d="M2 8h14v14H2z" fill="#fff" stroke="#b33"/><path d="M3 13l5-3 3 4 9-12 3 2-11 17z" fill="#c8232c"/></symbol>
<symbol id="refs" viewBox="0 0 24 24"><path d="M8 3h13v13H8z" fill="#fff" stroke="#b22" stroke-width="1.500"/><path d="M3 12h10v10H3z" fill="#f6d9d0" stroke="#b22" stroke-width="1.500"/><path d="M6 2h4v4H6zM19 2h4v4h-4zM1 20h4v4H1zM11 20h4v4h-4zM1 10h4v4H1z" fill="#222"/><path d="M11 6h8M11 9h8" stroke="#888"/></symbol>
<symbol id="tabc" viewBox="0 0 24 24"><path d="M3 7l9-6 9 4v10l-11 8-7-5z" fill="#2e62d8"/><path d="M12 8c-3 0-4 3-3 6" fill="none" stroke="#fff" stroke-width="2"/></symbol>
<symbol id="tabd" viewBox="0 0 24 24"><path d="M4 2h11l5 5v15H4z" fill="#eee"/><path d="M8 11h8l-4 4 4 4H8z" fill="#555"/></symbol>
</svg>

<div class="app">
  <div class="title">
    <span class="title-l"><svg class="i tl"><use href="#cube"/></svg>NX 7.5 <b class="t-nm">NX 7.5</b><span class="t-cn">建模</span></span>
    <span class="title-r"><b>SIEMENS</b><i class="wbtn"></i></span>
  </div>
  <nav class="menu">
    <span>文件(<u>F</u>)</span><span>编辑(<u>E</u>)</span><span>视图(<u>V</u>)</span><span>插入(<u>S</u>)</span><span>格式(<u>R</u>)</span><span>工具(<u>T</u>)</span><span>装配(<u>A</u>)</span><span>信息(<u>I</u>)</span><span>分析(<u>L</u>)</span><span class="mw">首选项(<u>P</u>)</span><span>窗口(<u>O</u>)</span><span>GC工具箱</span><span>星空外挂 V6.935F</span><span>帮助(<u>H</u>)</span><span>ET2008</span><span>HB_MOULD <u>M</u>6.6</span>
  </nav>

  <div class="tb tb1">
    <div class="grp g g0"><svg class="i"><use href="#logo"/></svg><span class="lbl">启动</span><i class="dd"></i><svg class="i"><use href="#doc"/></svg><svg class="i"><use href="#ofold"/></svg><svg class="i"><use href="#save"/></svg></div>
    <div class="grp"><svg class="i"><use href="#scis"/></svg><svg class="i"><use href="#copy"/></svg><svg class="i"><use href="#paste"/></svg></div>
    <div class="grp"><svg class="i"><use href="#undo"/></svg><i class="dd"></i><svg class="i"><use href="#redo"/></svg></div>
    <div class="grp"><svg class="i"><use href="#fit"/></svg><i class="dd"></i><svg class="i"><use href="#gsq"/></svg><i class="dd"></i></div>
    <div class="grp"><svg class="i"><use href="#info"/></svg></div>
    <div class="grp np"><div class="search"><span>查找命令</span><svg class="i sm"><use href="#mag"/></svg></div><i class="dd low"></i></div>
    <div class="grp g"><svg class="i"><use href="#fit"/></svg><i class="dd"></i><svg class="i"><use href="#shade"/></svg><i class="dd"></i><svg class="i"><use href="#cube"/></svg><i class="dd"></i><svg class="i"><use href="#ofold2"/></svg><svg class="i"><use href="#gdoc"/></svg><i class="dd"></i><svg class="i"><use href="#wsq"/></svg><i class="dd"></i></div>
    <div class="grp"><svg class="i"><use href="#door"/></svg><svg class="i"><use href="#door2"/></svg><i class="dd low"></i></div>
    <div class="grp g"><div class="combo c-sm"><span>1</span><i class="cbtn"></i></div><svg class="i"><use href="#layers"/></svg><svg class="i"><use href="#csys"/></svg><i class="dd"></i></div>
    <div class="grp"><svg class="i"><use href="#erase"/></svg><svg class="i"><use href="#palette"/></svg></div>
    <div class="grp"><svg class="i"><use href="#dflag"/></svg><i class="dd"></i></div>
    <div class="grp"><svg class="i"><use href="#ant"/></svg><i class="dd"></i><svg class="i"><use href="#ruler"/></svg><i class="dd low"></i></div>
  </div>

  <div class="tb tb2">
    <div class="grp g g5"><svg class="i"><use href="#sheet"/></svg><i class="dd"></i><svg class="i"><use href="#p1"/></svg><svg class="i"><use href="#p2"/></svg><svg class="i"><use href="#p3"/></svg><svg class="i"><use href="#p4"/></svg><svg class="i"><use href="#p5"/></svg><svg class="i"><use href="#p6"/></svg></div>
    <div class="grp"><svg class="i"><use href="#p7"/></svg><svg class="i"><use href="#p8"/></svg><svg class="i"><use href="#p9"/></svg><svg class="i"><use href="#p10"/></svg><svg class="i"><use href="#p11"/></svg><i class="dd"></i><svg class="i"><use href="#p12"/></svg><svg class="i"><use href="#p13"/></svg><svg class="i"><use href="#p14"/></svg><svg class="i"><use href="#p15"/></svg><svg class="i"><use href="#p16"/></svg></div>
    <div class="grp"><svg class="i"><use href="#p3"/></svg><svg class="i"><use href="#p17"/></svg><svg class="i"><use href="#sheet"/></svg><svg class="i"><use href="#p18"/></svg><svg class="i"><use href="#p6"/></svg><i class="dd low"></i></div>
    <div class="grp g"><svg class="i"><use href="#c1"/></svg><i class="dd"></i><svg class="i"><use href="#c2"/></svg><i class="dd"></i><svg class="i"><use href="#c3"/></svg><svg class="i"><use href="#c4"/></svg><i class="dd"></i><svg class="i"><use href="#c5"/></svg><i class="dd"></i><svg class="i"><use href="#c6"/></svg><i class="dd"></i><svg class="i"><use href="#c7"/></svg><svg class="i"><use href="#c8"/></svg><svg class="i"><use href="#c1"/></svg><i class="dd"></i><i class="dd low"></i></div>
    <div class="grp g"><svg class="i"><use href="#s1"/></svg><svg class="i"><use href="#s2"/></svg><svg class="i"><use href="#s3"/></svg><svg class="i"><use href="#s4"/></svg><svg class="i"><use href="#s5"/></svg><svg class="i"><use href="#s6"/></svg><svg class="i"><use href="#s7"/></svg><svg class="i"><use href="#s8"/></svg><i class="dd"></i><svg class="i"><use href="#s9"/></svg><i class="dd low"></i></div>
    <div class="grp g"><svg class="i"><use href="#l1"/></svg><svg class="i"><use href="#l2"/></svg><svg class="i"><use href="#l3"/></svg><svg class="i"><use href="#l4"/></svg><svg class="i"><use href="#l5"/></svg><svg class="i"><use href="#l6"/></svg><svg class="i"><use href="#l7"/></svg><svg class="i"><use href="#l8"/></svg><i class="dd low"></i></div>
  </div>

  <div class="tb tb3">
    <div class="grp g g0"><svg class="i"><use href="#dim"/></svg><svg class="i"><use href="#wrench"/></svg><svg class="i"><use href="#tcube"/></svg><span class="tile">去除<br>参数</span><svg class="i" viewBox="0 0 24 24"><path d="M1 7l6-4h16v16l-6 4H1z" fill="#e4e9f6" stroke="#3a4a8a"/><path d="M17 7l6-4v16l-6 4z" fill="#2a5bb6"/><text x="1.500" y="20" class="nc" textLength="15">NC</text></svg><svg class="i"><use href="#red"/></svg><svg class="i"><use href="#scube"/></svg><svg class="i"><use href="#sline"/></svg><svg class="i"><use href="#ycube"/></svg><i class="dd low"></i></div>
    <div class="grp g"><svg class="i"><use href="#spark"/></svg><svg class="i"><use href="#tri"/></svg><svg class="i"><use href="#ycube"/></svg><span class="tile">去除<br>参数</span><svg class="i"><use href="#gplus"/></svg><svg class="i"><use href="#xyz"/></svg><span class="tile big">写字</span><span class="tile blue">图层<br>命名</span><svg class="i"><use href="#yfold"/></svg><svg class="i"><use href="#bgc"/></svg><svg class="i"><use href="#arrL"/></svg><svg class="i"><use href="#arrR"/></svg><svg class="i"><use href="#gcube"/></svg><svg class="i"><use href="#cage"/></svg><svg class="i"><use href="#shield"/></svg><svg class="i" viewBox="0 0 24 24"><path d="M0 0h24v24H0z" fill="#f0ecd8"/><text x="10" y="12" class="pen-a">A</text><path d="M5 4v11l1 4 2-4V4z" fill="#444"/><path d="M1 20h20v2H1z" fill="#333"/></svg><svg class="i"><use href="#zi"/></svg><svg class="i"><use href="#power"/></svg><svg class="i"><use href="#brush"/></svg><i class="dd low"></i></div>
    <div class="grp g"><svg class="i"><use href="#d1"/></svg><svg class="i"><use href="#d2"/></svg><svg class="i"><use href="#d3"/></svg><svg class="i"><use href="#d4"/></svg><svg class="i"><use href="#d5"/></svg><svg class="i"><use href="#d6"/></svg><svg class="i"><use href="#d7"/></svg><svg class="i"><use href="#d8"/></svg><svg class="i"><use href="#d9"/></svg><svg class="i"><use href="#d10"/></svg><svg class="i"><use href="#d11"/></svg><svg class="i"><use href="#d12"/></svg><svg class="i"><use href="#d13"/></svg><svg class="i"><use href="#d14"/></svg><svg class="i"><use href="#d15"/></svg><i class="dd"></i><svg class="i"><use href="#d16"/></svg><svg class="i"><use href="#d17"/></svg><svg class="i"><use href="#d18"/></svg><svg class="i"><use href="#d19"/></svg><svg class="i"><use href="#d20"/></svg><i class="dd low"></i></div>
  </div>

  <div class="tb tb4">
    <div class="grp"><div class="combo c1"><span>无选择过滤器</span><i class="cbtn"></i></div><div class="combo c2"><span>整个装配</span><i class="cbtn"></i></div><svg class="i s"><use href="#binoc"/></svg></div>
    <div class="grp"><svg class="i s"><use href="#fun"/></svg><svg class="i s"><use href="#rbox"/></svg><i class="dd"></i><svg class="i s"><use href="#dim1"/></svg><svg class="i s"><use href="#dim2"/></svg></div>
    <div class="grp"><svg class="i s"><use href="#tgt"/></svg><svg class="i s"><use href="#drect"/></svg><i class="dd"></i></div>
    <div class="grp"><svg class="i s"><use href="#wire"/></svg><span class="bx"><svg class="i s"><use href="#bcube"/></svg></span></div>
    <div class="grp tight"><span class="bx"><svg class="i s"><use href="#snap"/></svg></span><span class="bx"><svg class="i s"><use href="#lr"/></svg></span><span class="bx"><svg class="i s"><use href="#lr2"/></svg></span><svg class="i s"><use href="#sq1"/></svg><span class="bx"><svg class="i s"><use href="#zig"/></svg></span><span class="bx"><svg class="i s"><use href="#wave"/></svg></span><span class="bx"><svg class="i s"><use href="#tee"/></svg></span><span class="bx"><svg class="i s"><use href="#ring"/></svg></span><svg class="i s"><use href="#octo"/></svg><span class="bx"><svg class="i s"><use href="#plus"/></svg></span><span class="bx"><svg class="i s"><use href="#lr2"/></svg></span><svg class="i s"><use href="#barc"/></svg><svg class="i s"><use href="#dchk"/></svg></div>
    <div class="grp"><svg class="i s"><use href="#r1"/></svg><svg class="i s"><use href="#r2"/></svg><svg class="i s"><use href="#r3"/></svg><svg class="i s"><use href="#r4"/></svg><svg class="i s"><use href="#r5"/></svg><svg class="i s"><use href="#r6"/></svg><svg class="i s"><use href="#bl1"/></svg><svg class="i s"><use href="#bl2"/></svg><svg class="i s"><use href="#ds"/></svg><svg class="i s"><use href="#ds"/></svg><svg class="i s"><use href="#ds"/></svg><svg class="i s"><use href="#ds"/></svg><svg class="i s"><use href="#dsc"/></svg><svg class="i s"><use href="#dg"/></svg><svg class="i s"><use href="#ds"/></svg><svg class="i s"><use href="#oval"/></svg><svg class="i s"><use href="#scr"/></svg><svg class="i s"><use href="#ham"/></svg><svg class="i s"><use href="#tan1"/></svg><svg class="i s"><use href="#pl1"/></svg><svg class="i s"><use href="#dm"/></svg><svg class="i s"><use href="#ball"/></svg><svg class="i s"><use href="#tall"/></svg><svg class="i s"><use href="#trap"/></svg></div>
    <div class="grp"><svg class="i s"><use href="#fr1"/></svg><svg class="i s"><use href="#fr2"/></svg><svg class="i s"><use href="#lf1"/></svg><svg class="i s"><use href="#lf2"/></svg><svg class="i s"><use href="#lf3"/></svg><svg class="i s"><use href="#lf4"/></svg><svg class="i s"><use href="#bowl"/></svg></div>
  </div>

  <main class="main">
    <aside class="strip">
      <div class="gearcell"><svg class="gear"><use href="#gear"/></svg></div>
      <div class="tab"><svg class="i"><use href="#nv1"/></svg></div>
      <div class="tab"><svg class="i"><use href="#nv2"/></svg></div>
      <div class="tab on"><svg class="i"><use href="#nv3"/></svg></div>
      <div class="tab"><svg class="i"><use href="#nv4"/></svg></div>
      <div class="tab"><svg class="i"><use href="#nv5"/></svg></div>
      <div class="tab sp"><svg class="i"><use href="#nv6"/></svg></div>
      <div class="tab sp"><svg class="i"><use href="#nv7"/></svg></div>
      <div class="tab sp"><svg class="i"><use href="#nv8"/></svg></div>
      <div class="tab"><svg class="i"><use href="#nv9"/></svg></div>
      <div class="tab"><svg class="i"><use href="#nv10"/></svg></div>
      <div class="tab"><svg class="i"><use href="#nv11"/></svg></div>
      <div class="tab"><svg class="i"><use href="#nv12"/></svg></div>
      <div class="tab"><svg class="i"><use href="#nv13"/></svg></div>
      <div class="tab"><svg class="i"><use href="#nv13"/></svg></div>
      <div class="tab"><svg class="i"><use href="#nv13"/></svg></div>
      <div class="tab"><svg class="i"><use href="#nv14"/></svg></div>
      <div class="tab"></div>
    </aside>

    <section class="panel">
      <header class="phead"><span>部件导航器</span><i class="pmax"></i></header>
      <div class="table">
        <div class="thead"><div class="th th-name"><span>名称 ( 已过滤 )</span><i class="sort"></i></div><div class="th">最新</div><div class="th">附注</div><div class="th"></div></div>
        <div class="tbody">
          <div class="row"><div class="cell t"><svg class="ex"><use href="#pd"/></svg><svg class="ri"><use href="#mvw"/></svg><span>模型视图</span></div><div></div><div></div><div></div></div>
          <div class="row"><div class="cell t"><svg class="ex"><use href="#pb"/></svg><svg class="ck"><use href="#ckg"/></svg><svg class="ri"><use href="#cam"/></svg><span>摄像机</span></div><div></div><div></div><div></div></div>
          <div class="row"><div class="cell t"><svg class="ex"><use href="#mu"/></svg><span>引用集</span></div><div></div><div></div><div></div></div>
          <div class="row"><div class="cell t l1"><svg class="ex"><use href="#mu"/></svg><svg class="ck"><use href="#ckr"/></svg><svg class="ri"><use href="#refs"/></svg><span>模型</span></div><div></div><div></div><div></div></div>
          <div class="row"><div class="cell t l2"><svg class="ex"><use href="#pd"/></svg><svg class="ck"><use href="#ckr"/></svg><svg class="ri"><use href="#rc"/></svg><span>实体 "体 (0)"</span></div><div></div><div></div><div></div></div>
          <div class="row"><div class="cell t l2"><svg class="ex"><use href="#pb"/></svg><svg class="ck"><use href="#ckr"/></svg><svg class="ri"><use href="#rc"/></svg><span>实体 "体 (1)"</span></div><div></div><div></div><div></div></div>
          <div class="row"><div class="cell t l2"><svg class="ex"><use href="#pb"/></svg><svg class="ck"><use href="#ckr"/></svg><svg class="ri"><use href="#rc"/></svg><span>实体 "体 (2)"</span></div><div></div><div></div><div></div></div>
          <div class="row"><div class="cell t l2"><svg class="ex"><use href="#pu"/></svg><svg class="ck"><use href="#ckr"/></svg><svg class="ri"><use href="#rc"/></svg><span>实体 "体 (4)"</span></div><div></div><div></div><div></div></div>
          <div class="row"><div class="cell"></div><div></div><div></div><div></div></div>
          <div class="row"><div class="cell"></div><div></div><div></div><div></div></div>
          <div class="row"><div class="cell"></div><div></div><div></div><div></div></div>
          <div class="row"><div class="cell"></div><div></div><div></div><div></div></div>
          <div class="row"><div class="cell"></div><div></div><div></div><div></div></div>
          <div class="row"><div class="cell"></div><div></div><div></div><div></div></div>
          <div class="row"><div class="cell"></div><div></div><div></div><div></div></div>
          <div class="row"><div class="cell"></div><div></div><div></div><div></div></div>
          <div class="row"><div class="cell"></div><div></div><div></div><div></div></div>
          <div class="row"><div class="cell"></div><div></div><div></div><div></div></div>
          <div class="row"><div class="cell"></div><div></div><div></div><div></div></div>
          <div class="row"><div class="cell"></div><div></div><div></div><div></div></div>
          <div class="row"><div class="cell"></div><div></div><div></div><div></div></div>
          <div class="row"><div class="cell"></div><div></div><div></div><div></div></div>
          <div class="row"><div class="cell"></div><div></div><div></div><div></div></div>
          <div class="row"><div class="cell"></div><div></div><div></div><div></div></div>
          <div class="row"><div class="cell"></div><div></div><div></div><div></div></div>
          <div class="row"><div class="cell"></div><div></div><div></div><div></div></div>
          <div class="row"><div class="cell"></div><div></div><div></div><div></div></div>
          <div class="row"><div class="cell"></div><div></div><div></div><div></div></div>
          <div class="row"><div class="cell"></div><div></div><div></div><div></div></div>
          <div class="row"><div class="cell"></div><div></div><div></div><div></div></div>
          <div class="row"><div class="cell"></div><div></div><div></div><div></div></div>
          <div class="row"><div class="cell"></div><div></div><div></div><div></div></div>
          <div class="row"><div class="cell"></div><div></div><div></div><div></div></div>
        </div>
      </div>
      <div class="splitter"><i></i></div>
      <div class="acc"><span>相关性</span><b class="chev"></b></div>
      <div class="acc"><span>细节</span><b class="chev"></b></div>
    </section>

    <section class="view">
      <div class="tabs"><div class="ftab"><svg class="tab-ic"><use href="#tabc"/></svg><span>MA0100D.prt</span><svg class="tab-d"><use href="#tabd"/></svg><span class="tab-x">✕</span></div></div>
      <div class="canvas">
        <svg class="model" viewBox="0 0 1568 1260" preserveAspectRatio="none">
          <path d="M100 735L215 1105Q225 1125 270 1132L1190 1196Q1240 1198 1255 1160L1310 960L1460 370L1430 270L1270 660L600 775Z" fill="url(#gBody)"/>
          <path d="M1278 672L1335 745L1350 830L1310 960L1290 985Q1250 1000 1240 900L1270 760Z" fill="#0a78cc"/>
          <path d="M375 62L760 95L778 125L820 310L955 322L1015 245L1060 258L1090 225L1400 248Q1435 255 1440 285L1460 370L1448 450L1400 590L1372 725L1335 745L1278 672L1270 740Q1250 790 1200 812L1100 808L1000 800L620 775L490 795L450 760L200 750L200 785L130 770L100 735L105 620L215 170L250 112Q275 95 365 95Z" fill="#06a9fb"/>
          <path d="M760 95L778 125L820 310L790 330L700 270L725 205Z" fill="#0a8ce2"/>
          <path d="M955 325L1425 345L1450 435L1345 465L1200 500L1100 465L965 420Z" fill="url(#gWedge)"/>
          <path d="M850 470L925 478L1075 520L1180 545L1165 665L1090 660L840 630Z" fill="url(#gCyl)"/>
          <path d="M1190 570L1310 578L1400 590L1375 730L1280 670L1180 660Z" fill="url(#gRight)"/>
          <path d="M105 620L205 625Q232 640 220 682L110 680Z" fill="#0765b0"/>
          <path d="M240 470C235 350 300 225 400 192C470 180 560 190 600 225C625 250 635 275 640 295" fill="none" stroke="#0766b2" stroke-width="20"/>
          <path d="M247 470C250 540 300 590 380 628C450 655 510 685 560 722C590 748 605 770 620 778" fill="none" stroke="#0766b2" stroke-width="13"/>
          <g fill="none" stroke="#02335a" stroke-width="2.400">
            <path d="M228 470C224 345 291 211 398 179C475 168 567 178 612 218C636 245 646 275 652 300"/>
            <path d="M254 470C251 360 311 240 403 207C470 197 548 202 588 237C610 257 623 282 630 298"/>
            <path d="M238 500C243 560 298 602 373 644C448 669 503 699 553 736C583 759 598 779 610 789"/>
            <path d="M300 470C280 520 310 570 385 612C450 640 520 675 570 712C600 735 618 762 628 778"/>
            <path d="M640 85L610 205M655 82L632 205M215 175L340 178L365 130L375 62"/>
            <path d="M240 440L305 425M250 460L305 448M420 655L385 705M445 670L405 720M110 680L220 682L235 680L200 750"/>
            <path d="M880 690L860 790M965 692L945 795M1020 695L1000 800M1120 705L1100 808M955 322L965 420M820 310L955 325M1100 808L1200 812"/>
            <path d="M1340 465L1320 570M1360 470L1340 575M1350 470L1445 500M1320 575L1400 590M1100 540L1085 655M1118 540L1103 658M1210 580L1185 665"/>
            <path d="M1280 675L1335 745L1375 730M830 310L790 410M955 420L900 445L840 455M820 310C800 340 790 380 780 415"/>
            <path d="M340 230C310 280 295 340 300 400M300 400C290 450 300 500 330 540M345 540L400 500M335 245L400 225L500 225L560 235L610 270M330 310L350 350M360 270L400 275L430 250"/>
            <path d="M360 300L410 290M340 400L400 390M330 505L420 525M420 525L440 560M450 535L600 540L620 565M640 530L680 545M680 545L730 590M730 590L750 650M640 650L760 640M500 690L620 640"/>
          </g>
          <path d="M435 270Q470 262 482 292L560 292Q590 268 606 305L612 345L428 348Z" fill="#0a5aa0" stroke="#02335a" stroke-width="2"/>
          <path d="M430 420L600 430L720 432L728 510L620 525L520 510L450 512Z" fill="#05508c" stroke="#02335a" stroke-width="2"/>
          <path d="M400 330L440 310L430 420L395 440Z" fill="#0a7acc" stroke="#02335a" stroke-width="2"/>
          <path d="M435 350L610 345L600 430L440 420Z" fill="#0aa6f6" stroke="#02335a" stroke-width="2"/>
          <path d="M445 440C460 415 520 415 530 450L530 505L445 505Z" fill="#0765b0" stroke="#02335a" stroke-width="2"/>
          <path d="M470 505C470 465 510 465 515 505Z" fill="#033a66"/>
          <path d="M470 290C470 265 440 262 437 280L430 340L465 340ZM565 292C570 272 600 275 605 300L610 340L570 340Z" fill="#0a84dc" stroke="#02335a" stroke-width="2"/>
          <g fill="none" stroke="#02335a" stroke-width="3">
            <path d="M600 430L595 515M615 432L610 518M630 432L625 520M645 432L640 520M660 432L655 520M672 434L668 518"/>
            <path d="M560 360C575 350 590 355 600 365M560 375h45M570 395h40M330 435h80M320 470h90M340 410l60 20M580 395l30 0M640 350l50 20M650 395l40 30M690 430l40 60"/>
            <path d="M410 300l-10 60M418 320l-6 60M420 400l30 25M520 420l50 10M450 370l-20 40M540 340l-10 40M610 345l30 30M620 300l40 20M640 290l20-20M668 380l40-10M410 470l30-20M420 490l20-10M720 450l20 60M700 520l-30 10M580 510l30 30"/>
          </g>
          <path d="M570 395l42 3" stroke="#02335a" stroke-width="4" stroke-dasharray="6 3"/>
          <circle cx="476" cy="342" r="17" fill="#06a9fb" stroke="#02335a" stroke-width="3"/><circle cx="476" cy="342" r="7" fill="#05508c"/>
          <circle cx="518" cy="380" r="20" fill="#06a9fb" stroke="#02335a" stroke-width="3"/><circle cx="518" cy="380" r="9" fill="#0765b0"/>
          <path d="M675 270L725 300L795 470L760 505L695 375Z" fill="url(#gBar)" stroke="#02335a" stroke-width="2"/>
          <path d="M735 480L790 410L835 442L780 512Z" fill="#0aa0f0" stroke="#02335a" stroke-width="2"/>
          <path d="M770 420L825 455M785 410L835 445" stroke="#02335a" stroke-width="4"/>
          <path d="M750 510L820 490L838 625L780 635Z" fill="#0868b5" stroke="#02335a" stroke-width="2"/>
          <path d="M770 565L825 560L830 615L785 625Z" fill="#05508c"/>
          <ellipse cx="788" cy="533" rx="20" ry="18" fill="#0aa6f6" stroke="#02335a" stroke-width="2"/><ellipse cx="788" cy="533" rx="10" ry="9" fill="#1d9e4a"/>
          <g fill="#0a62ac" stroke="#02335a" stroke-width="2">
            <path d="M425 605L515 560L540 578L440 628Z"/><path d="M520 590L600 565L626 578L540 612Z"/><path d="M550 640L630 628L625 650L530 672Z"/><path d="M670 625L745 595L765 630L680 660Z"/><path d="M680 552L708 548L705 582L685 585Z"/><path d="M330 345L362 350L355 388L325 370Z"/><path d="M640 200L692 205L690 220L640 215Z"/><path d="M510 240L535 238L528 264L495 262Z"/><path d="M375 265L400 260L395 282L375 285Z"/><path d="M645 240L680 250L672 295L640 280Z"/><path d="M330 420L400 410L405 460L340 470Z"/><path d="M405 290L440 285L438 380L400 395Z"/>
            <path d="M930 455L990 430L1075 455L1030 515L930 482Z"/><path d="M1100 468L1215 500L1200 545L1075 520Z"/>
            <path d="M892 680L965 682L965 692L892 690ZM925 670L945 650L945 680ZM1028 690L1070 692L1070 702L1028 700Z"/>
            <path d="M560 530L600 525L605 560L570 565Z"/><path d="M430 540L470 530L465 570L440 575Z"/>
          </g>
          <path d="M945 465L990 445L1055 462L1022 500L945 475Z" fill="#0aa0f0" stroke="#02335a" stroke-width="2"/>
          <path d="M1115 480L1195 505L1188 535L1095 512Z" fill="#0aa0f0" stroke="#02335a" stroke-width="2"/>
          <g fill="#055592">
            <ellipse cx="463" cy="122" rx="26" ry="24"/><ellipse cx="1145" cy="275" rx="34" ry="29"/><ellipse cx="1285" cy="294" rx="27" ry="23"/><ellipse cx="1367" cy="300" rx="23" ry="21"/><ellipse cx="810" cy="712" rx="43" ry="33"/><ellipse cx="1158" cy="727" rx="25" ry="23"/><ellipse cx="258" cy="703" rx="25" ry="23"/><ellipse cx="150" cy="738" rx="23" ry="20"/><ellipse cx="387" cy="658" rx="12" ry="10"/><ellipse cx="555" cy="758" rx="12" ry="10"/><ellipse cx="270" cy="500" rx="12" ry="10"/><ellipse cx="312" cy="330" rx="12" ry="10"/><ellipse cx="1000" cy="478" rx="11" ry="9"/><ellipse cx="1178" cy="515" rx="10" ry="9"/><ellipse cx="1305" cy="815" rx="6" ry="16"/>
          </g>
          <g fill="#06a9fb"><ellipse cx="355" cy="873" rx="16" ry="12"/><ellipse cx="677" cy="858" rx="11" ry="6"/><ellipse cx="997" cy="917" rx="16" ry="11"/><ellipse cx="820" cy="725" rx="30" ry="18"/><ellipse cx="1150" cy="285" rx="22" ry="15"/><ellipse cx="150" cy="745" rx="13" ry="8"/></g>
          <path d="M165 875L305 885L360 1045L465 1052L415 895L980 935L1040 1095L1145 1100L1100 945L1240 955M200 885L240 1040M1205 955L1185 1130" fill="none" stroke="#27506e" stroke-width="2"/>
          <path d="M1022 695L1120 705L1100 808L1000 800Z" fill="#ffc20e"/>
          <path d="M1100 662L1110 662L1118 700L1090 705Z" fill="#a8322a"/>
          <path d="M955 600l25 5M952 615l25 5M950 630l26 5" stroke="#02335a" stroke-width="3"/>
          <path d="M345 525L385 610" stroke="#1414d8" stroke-width="7"/>
          <path d="M410 500L380 612" stroke="#5cc23c" stroke-width="5"/>
          <path d="M385 628L525 640L400 636Z" fill="#d83a3a" stroke="#d83a3a" stroke-width="3"/>
          <text x="498" y="686" class="xc">XC</text>
        </svg>
        <svg class="triad" viewBox="0 0 100 70">
          <path d="M28 17L48 17L59 32L56 52L30 52L26 30Z" fill="#9a9a9a"/>
          <path d="M28 17L48 17L54 33L27 33Z" fill="#b5b5b5"/><path d="M27 33H54L59 32M54 33L56 52M48 17L54 33" fill="none" stroke="#cdcdcd"/>
          <path d="M29 52l10-36" stroke="#7fb485" stroke-width="1.500"/>
          <path d="M29 52L20 24" stroke="#1f4fb8" stroke-width="3"/>
          <path d="M29 52l36 2" stroke="#c83030" stroke-width="3"/><path d="M72 54l-10-3v6z" fill="#c83030"/>
          <circle cx="29" cy="52" r="4" fill="#e8e8e8"/>
          <text x="16" y="28" class="ta tz">Z</text><text x="36" y="17" class="ta ty">Y</text><text x="70" y="60" class="ta tx">X</text>
        </svg>
        <div class="wm">
          <svg class="wm-ic" viewBox="0 0 72 84"><path d="M36 1L71 21V63L36 83 1 63V21Z" fill="url(#gHexA)"/><path d="M36 1L71 21 45 27C43 16 41 8 36 1ZM1 63C10 40 14 34 27 22 18 34 16 48 22 63ZM71 63L36 83C45 72 50 66 50 60 60 60 66 62 71 63Z" fill="#0a5a88"/><path d="M36 18L56 30V54L36 66 16 54V30Z" fill="#000"/><path d="M36 24L51 33 36 42 21 33Z" fill="#6f8fa0"/><path d="M21 33L36 42V60L21 51Z" fill="#4c7c98"/><path d="M51 33L36 42V60L51 51Z" fill="#0c5a88"/></svg>
          <div class="wm-tx"><div class="wm-b">3D世界网</div><div class="wm-s">WWW.3DSJW.COM</div></div>
        </div>
      </div>
    </section>
  </main>
</div>
</body>
</html>
```

FILE: styles.css
```css
* { box-sizing: border-box; }
html, body { margin: 0; height: 100%; overflow: hidden; }
body { font: 12px/1.2 "Noto Sans", "Noto Sans CJK SC", sans-serif; color: #222; background: #ececec; }
.sprite { position: absolute; width: 0; height: 0; }
.app { display: flex; flex-direction: column; height: 937px; }

.title { height: 9px; flex: none; background: #1a1a1a; color: #fff; display: flex; justify-content: space-between; overflow: hidden; font-size: 14px; line-height: 14px; }
.title-l { display: flex; margin-top: -9px; }
.i.tl { width: 14px; height: 18px; margin-right: 6px; }
.t-nm { font-weight: 400; margin-left: 6px; }
.t-cn { margin-left: 14px; }
.title-r { display: flex; margin-top: -8px; margin-right: 10px; }
.title-r b { font-size: 14px; letter-spacing: .3px; }
.wbtn { width: 14px; height: 15px; margin-left: 24px; background: #ddd; }

.menu { height: 28px; flex: none; display: flex; align-items: center; gap: 13.9px; padding-left: 11px; background: linear-gradient(#e9e9e9, #e3e3e3); color: #2c2c2c; }
.menu .mw { margin-left: 10px; }
.menu u { text-decoration-thickness: 1px; }

.tb { flex: none; display: grid; background: #d9d9d9; }
.tb1 { height: 35px; grid-template-columns: 167px 100px 80px 98px 37px 164px 258px 80px 143px 69px 49px 91px 1fr; background: linear-gradient(90deg, #e2e2e2, #e2e2e2); }
.tb2 { height: 34px; grid-template-columns: 241px 328px 172px 372px 314px 270px 1fr; background: linear-gradient(#d9d9d9, #d2d2d2); }
.tb3 { height: 34px; grid-template-columns: 298px 611px 654px 1fr; background: linear-gradient(#d2d2d2, #c9c9c9); border-bottom: 1px solid #a8a8a8; }
.tb4 { height: 32px; grid-template-columns: 343px 106px 63px 53px 306px 558px 171px 1fr; background: linear-gradient(#cfcfcf, #e2e2e2); border-bottom: 1px solid #d4d4d4; }
.tb4 .grp { background: none; border-top: 0; }

.grp { display: flex; align-items: center; justify-content: space-between; padding: 0 5px 0 7px; min-width: 0; background: linear-gradient(#ececec, #d6d6d6); border-top: 1px solid #f6f6f6; border-right: 1px solid #f6f6f6; box-shadow: inset -1px 0 0 #bdbdbd; }
.g { padding-left: 14px; background-image: repeating-linear-gradient(#9c9c9c 0 1px, transparent 1px 3px), linear-gradient(#ececec, #d6d6d6); background-size: 2px 24px, auto; background-position: 5px center, 0 0; background-repeat: no-repeat; }
.g0 { padding-left: 8px; background-position: 2px center, 0 0; }
.g5 { padding-left: 14px; }
.np { padding-left: 5px; }
.tight { padding-left: 4px; padding-right: 7px; }

.i { width: 23px; height: 24px; flex: none; display: block; }
.i.s { width: 18px; height: 18px; }
.i.sm { width: 20px; height: 20px; }
.lbl { font-size: 12px; color: #222; }
.dd { flex: none; width: 0; height: 0; border: 3.5px solid transparent; border-top: 4px solid #111; border-bottom: 0; }
.dd.low { margin-top: 14px; }
.nc { font: 700 11px "Liberation Mono", monospace; fill: #1a2a9a; }
.pen-a { font: 700 15px "Liberation Serif", serif; fill: #1a1a8a; }

.search { flex: 1; height: 24px; margin-right: 3px; display: flex; align-items: center; justify-content: space-between; padding: 0 8px 0 4px; background: #fff; border: 1px solid #bbb; border-radius: 2px; color: #9a9a9a; }
.combo { height: 21px; display: flex; align-items: center; justify-content: space-between; background: #fff; border: 1px solid #9a9a9a; border-radius: 3px; font-size: 12px; color: #111; padding-left: 2px; }
.c1 { width: 148px; margin-left: -5px; }
.c2 { width: 155px; }
.c-sm { width: 51px; height: 22px; }
.cbtn { width: 17px; height: 100%; background: linear-gradient(#a9c6e8, #3d74ba); display: flex; align-items: center; justify-content: center; border-radius: 2px; }
.cbtn::after { content: ""; border: 5px solid transparent; border-top: 6px solid #102a5a; border-bottom: 0; }
.tile { flex: none; width: 24px; height: 24px; background: #fff; font-size: 9.5px; line-height: 11px; text-align: center; color: #333; padding-top: 1px; }
.tile.big { font-size: 11.5px; line-height: 22px; white-space: nowrap; color: #555; }
.tile.blue { color: #2a2ac0; }
.bx { flex: none; width: 22px; height: 22px; display: flex; align-items: center; justify-content: center; background: linear-gradient(#fdfdfd, #e2e2e2); border: 1px solid #555; border-radius: 3px; }

.main { flex: 1; min-height: 0; display: flex; }
.strip { width: 28px; flex: none; overflow: hidden; background: linear-gradient(#b7b7b7, #b0b0b0 70%, #bcbcbc); padding-left: 2px; }
.gearcell { height: 46px; margin-left: -2px; padding-top: 8px; display: flex; justify-content: center; }
.gear { width: 16px; height: 16px; }
.tab { height: 40px; margin-bottom: 2px; display: flex; align-items: center; justify-content: center; background: #e9e9e9; border: 1px solid #8e8e8e; border-right: 0; border-radius: 4px 0 0 4px; }
.tab .i { width: 22px; height: 24px; }
.tab.on { background: #f4f4f4; border-color: transparent; margin-left: -2px; }
.tab.sp { margin-top: 13px; }

.panel { width: 580px; flex: none; display: flex; flex-direction: column; background: #ececec; padding: 0 11px 0 8px; }
.phead { height: 31px; flex: none; display: flex; align-items: center; justify-content: space-between; padding: 1px 4px 0 4px; font-weight: 700; color: #333; }
.pmax { width: 13px; height: 12px; border: 1px solid #222; border-top-width: 2px; background: #f4f4f4; }
.table { flex: 1; min-height: 0; display: flex; flex-direction: column; background: #fff; border: 1px solid #7a7a7a; overflow: hidden; }
.thead, .row { display: grid; grid-template-columns: 277px 100px 100px 1fr; flex: none; }
.thead { height: 22px; background: linear-gradient(#f0f0f0, #dfdfdf); border-bottom: 1px solid #9a9a9a; }
.th { display: flex; align-items: center; padding-left: 6px; border-right: 1px solid #b5b5b5; color: #333; }
.th-name { gap: 18px; }
.th:last-child { border-right: 0; }
.sort { width: 0; height: 0; border: 5px solid transparent; border-bottom: 6px solid #111; border-top: 0; }
.tbody { flex: 1; min-height: 0; overflow: hidden; }
.row { height: 20px; border-bottom: 1px solid #ededed; }
.row:nth-child(even) { background: #f9f9f8; }
.row > div { border-right: 1px solid #e9e9e9; }
.row > div:last-child { border-right: 0; }
.cell { display: flex; align-items: center; color: #444; }
.t span { white-space: nowrap; }
.l1 { padding-left: 20px; }
.l2 { padding-left: 38px; }
.ex { width: 16px; height: 20px; flex: none; }
.ck { width: 13px; height: 14px; flex: none; margin-left: 4px; }
.ri { width: 16px; height: 16px; flex: none; margin: 0 3px 0 2px; }
.ex + span { margin-left: 6px; }
.splitter { height: 12px; flex: none; display: flex; align-items: center; justify-content: center; background: linear-gradient(#ececec 45%, #c8c8c8 45% 55%, #ececec 55%); }
.splitter i { width: 105px; height: 6px; background: #d6d6d6; border: 1px solid #b0b0b0; }
.acc { height: 22px; flex: none; display: flex; align-items: center; justify-content: space-between; padding-left: 7px; background: linear-gradient(#f6f6f6 45%, #dcdcdc 45%, #e4e4e4); border-bottom: 1px solid #999; color: #2a2a50; }
.acc + .acc { margin-top: 2px; }
.chev { width: 23px; height: 100%; display: flex; align-items: center; justify-content: center; border-left: 1px solid #aaa; }
.chev::after { content: ""; width: 7px; height: 7px; margin-top: -3px; border: solid #555; border-width: 0 3px 3px 0; transform: rotate(45deg); }

.view { flex: 1; min-width: 0; display: flex; flex-direction: column; background: #f0f0f0; }
.tabs { height: 24px; flex: none; padding-top: 1px; }
.ftab { width: 140px; height: 23px; display: flex; align-items: center; gap: 6px; padding-left: 6px; background: #565656; color: #e4e4e4; font-size: 12.4px; border-radius: 2px 2px 0 0; }
.tab-ic { width: 15px; height: 15px; flex: none; }
.tab-d { width: 14px; height: 15px; flex: none; }
.tab-x { font-size: 11px; color: #a8a8a8; margin-left: -2px; }
.canvas { flex: 1; position: relative; background: #000; overflow: hidden; margin-left: 1px; }
.model { position: absolute; left: 291px; top: 274px; width: 560px; height: 420px; }
.xc { font: 700 34px "Liberation Sans", sans-serif; fill: #c8323a; }
.triad { position: absolute; left: 31px; top: 654px; width: 100px; height: 70px; }
.ta { font: 11px "Liberation Sans", sans-serif; }
.tz { fill: #2a56c8; font-size: 13px; }
.ty { fill: #6bb36f; font-size: 12px; }
.tx { fill: #d23c3c; font-size: 13px; }
.wm { position: absolute; right: 25px; bottom: 13px; display: flex; align-items: center; gap: 8px; }
.wm-ic { width: 72px; height: 84px; flex: none; }
.wm-b { font: 700 41.5px/44px "Liberation Sans", "Noto Sans CJK SC", sans-serif; color: #7c7c7c; white-space: nowrap; }
.wm-s { font: 12px/14px "Liberation Sans", sans-serif; letter-spacing: 2.7px; color: #777; margin-top: 3px; transform: scaleX(1.12); transform-origin: left; white-space: nowrap; }
```
